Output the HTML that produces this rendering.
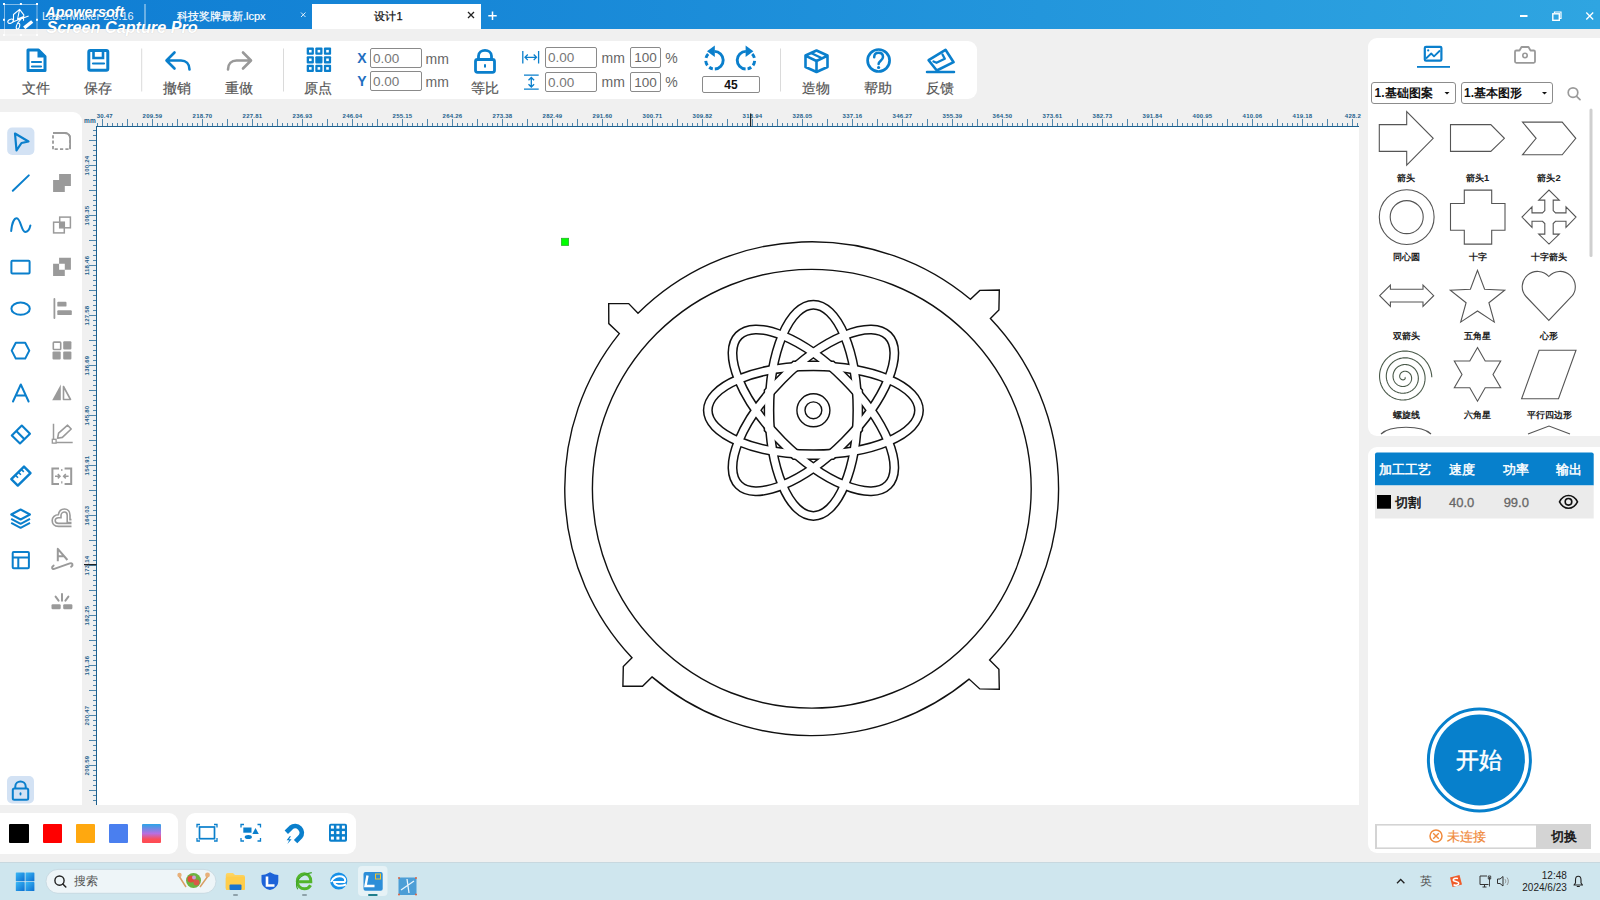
<!DOCTYPE html>
<html><head><meta charset="utf-8">
<style>
*{box-sizing:border-box;margin:0;padding:0}
html,body{width:1600px;height:900px;overflow:hidden;background:#F0F0F0;font-family:"Liberation Sans",sans-serif;position:relative}
.a{position:absolute}
.panel{position:absolute;background:#fff;border-radius:9px}
.lbl{position:absolute;font-size:14px;color:#555;white-space:nowrap;line-height:14px}
svg{position:absolute;overflow:visible}
</style></head><body>

<!-- title bar -->
<div class="a" style="left:0;top:0;width:1600px;height:29px;background:linear-gradient(90deg,#0F7DD3 0%,#1787D7 30%,#2FA5E1 100%)"></div>
<div class="a" style="left:312px;top:4px;width:169px;height:25px;background:#fff"></div>

<!-- panels -->
<div class="panel" style="left:-9px;top:41px;width:986px;height:58px"></div>
<div class="panel" style="left:-9px;top:112px;width:91px;height:693px;border-radius:0 9px 0 0"></div>
<div class="panel" style="left:1368px;top:38px;width:240px;height:398px"></div>
<div class="panel" style="left:1368px;top:447px;width:240px;height:406px"></div>
<div class="panel" style="left:-9px;top:813px;width:187px;height:41px"></div>
<div class="panel" style="left:186px;top:813px;width:170px;height:41px"></div>

<!-- canvas -->
<div class="a" style="left:97px;top:127px;width:1262px;height:678px;background:#fff"></div>

<!-- taskbar -->
<div class="a" style="left:0;top:862px;width:1600px;height:38px;background:#CFE6EE;border-top:1px solid #C8D8DF"></div>
<svg class="a" style="left:0;top:0" width="1600" height="900" shape-rendering="crispEdges">
<rect x="96" y="126" width="1263" height="1" fill="#1D5F8C"/>
<rect x="96" y="126" width="1" height="679" fill="#1D5F8C"/>
<rect x="97" y="123" width="1" height="3" fill="#4F86AD"/>
<rect x="102" y="119" width="1" height="7" fill="#4F86AD"/>
<rect x="107" y="123" width="1" height="3" fill="#4F86AD"/>
<rect x="112" y="123" width="1" height="3" fill="#4F86AD"/>
<rect x="117" y="123" width="1" height="3" fill="#4F86AD"/>
<rect x="122" y="123" width="1" height="3" fill="#4F86AD"/>
<rect x="127" y="119" width="1" height="7" fill="#4F86AD"/>
<rect x="132" y="123" width="1" height="3" fill="#4F86AD"/>
<rect x="137" y="123" width="1" height="3" fill="#4F86AD"/>
<rect x="142" y="123" width="1" height="3" fill="#4F86AD"/>
<rect x="147" y="123" width="1" height="3" fill="#4F86AD"/>
<rect x="152" y="119" width="1" height="7" fill="#4F86AD"/>
<rect x="157" y="123" width="1" height="3" fill="#4F86AD"/>
<rect x="162" y="123" width="1" height="3" fill="#4F86AD"/>
<rect x="167" y="123" width="1" height="3" fill="#4F86AD"/>
<rect x="172" y="123" width="1" height="3" fill="#4F86AD"/>
<rect x="177" y="119" width="1" height="7" fill="#4F86AD"/>
<rect x="182" y="123" width="1" height="3" fill="#4F86AD"/>
<rect x="187" y="123" width="1" height="3" fill="#4F86AD"/>
<rect x="192" y="123" width="1" height="3" fill="#4F86AD"/>
<rect x="197" y="123" width="1" height="3" fill="#4F86AD"/>
<rect x="202" y="119" width="1" height="7" fill="#4F86AD"/>
<rect x="207" y="123" width="1" height="3" fill="#4F86AD"/>
<rect x="212" y="123" width="1" height="3" fill="#4F86AD"/>
<rect x="217" y="123" width="1" height="3" fill="#4F86AD"/>
<rect x="222" y="123" width="1" height="3" fill="#4F86AD"/>
<rect x="227" y="119" width="1" height="7" fill="#4F86AD"/>
<rect x="232" y="123" width="1" height="3" fill="#4F86AD"/>
<rect x="237" y="123" width="1" height="3" fill="#4F86AD"/>
<rect x="242" y="123" width="1" height="3" fill="#4F86AD"/>
<rect x="247" y="123" width="1" height="3" fill="#4F86AD"/>
<rect x="252" y="119" width="1" height="7" fill="#4F86AD"/>
<rect x="257" y="123" width="1" height="3" fill="#4F86AD"/>
<rect x="262" y="123" width="1" height="3" fill="#4F86AD"/>
<rect x="267" y="123" width="1" height="3" fill="#4F86AD"/>
<rect x="272" y="123" width="1" height="3" fill="#4F86AD"/>
<rect x="277" y="119" width="1" height="7" fill="#4F86AD"/>
<rect x="282" y="123" width="1" height="3" fill="#4F86AD"/>
<rect x="287" y="123" width="1" height="3" fill="#4F86AD"/>
<rect x="292" y="123" width="1" height="3" fill="#4F86AD"/>
<rect x="297" y="123" width="1" height="3" fill="#4F86AD"/>
<rect x="302" y="119" width="1" height="7" fill="#4F86AD"/>
<rect x="307" y="123" width="1" height="3" fill="#4F86AD"/>
<rect x="312" y="123" width="1" height="3" fill="#4F86AD"/>
<rect x="317" y="123" width="1" height="3" fill="#4F86AD"/>
<rect x="322" y="123" width="1" height="3" fill="#4F86AD"/>
<rect x="327" y="119" width="1" height="7" fill="#4F86AD"/>
<rect x="332" y="123" width="1" height="3" fill="#4F86AD"/>
<rect x="337" y="123" width="1" height="3" fill="#4F86AD"/>
<rect x="342" y="123" width="1" height="3" fill="#4F86AD"/>
<rect x="347" y="123" width="1" height="3" fill="#4F86AD"/>
<rect x="352" y="119" width="1" height="7" fill="#4F86AD"/>
<rect x="357" y="123" width="1" height="3" fill="#4F86AD"/>
<rect x="362" y="123" width="1" height="3" fill="#4F86AD"/>
<rect x="367" y="123" width="1" height="3" fill="#4F86AD"/>
<rect x="372" y="123" width="1" height="3" fill="#4F86AD"/>
<rect x="377" y="119" width="1" height="7" fill="#4F86AD"/>
<rect x="382" y="123" width="1" height="3" fill="#4F86AD"/>
<rect x="387" y="123" width="1" height="3" fill="#4F86AD"/>
<rect x="392" y="123" width="1" height="3" fill="#4F86AD"/>
<rect x="397" y="123" width="1" height="3" fill="#4F86AD"/>
<rect x="402" y="119" width="1" height="7" fill="#4F86AD"/>
<rect x="407" y="123" width="1" height="3" fill="#4F86AD"/>
<rect x="412" y="123" width="1" height="3" fill="#4F86AD"/>
<rect x="417" y="123" width="1" height="3" fill="#4F86AD"/>
<rect x="422" y="123" width="1" height="3" fill="#4F86AD"/>
<rect x="427" y="119" width="1" height="7" fill="#4F86AD"/>
<rect x="432" y="123" width="1" height="3" fill="#4F86AD"/>
<rect x="437" y="123" width="1" height="3" fill="#4F86AD"/>
<rect x="442" y="123" width="1" height="3" fill="#4F86AD"/>
<rect x="447" y="123" width="1" height="3" fill="#4F86AD"/>
<rect x="452" y="119" width="1" height="7" fill="#4F86AD"/>
<rect x="457" y="123" width="1" height="3" fill="#4F86AD"/>
<rect x="462" y="123" width="1" height="3" fill="#4F86AD"/>
<rect x="467" y="123" width="1" height="3" fill="#4F86AD"/>
<rect x="472" y="123" width="1" height="3" fill="#4F86AD"/>
<rect x="477" y="119" width="1" height="7" fill="#4F86AD"/>
<rect x="482" y="123" width="1" height="3" fill="#4F86AD"/>
<rect x="487" y="123" width="1" height="3" fill="#4F86AD"/>
<rect x="492" y="123" width="1" height="3" fill="#4F86AD"/>
<rect x="497" y="123" width="1" height="3" fill="#4F86AD"/>
<rect x="502" y="119" width="1" height="7" fill="#4F86AD"/>
<rect x="507" y="123" width="1" height="3" fill="#4F86AD"/>
<rect x="512" y="123" width="1" height="3" fill="#4F86AD"/>
<rect x="517" y="123" width="1" height="3" fill="#4F86AD"/>
<rect x="522" y="123" width="1" height="3" fill="#4F86AD"/>
<rect x="527" y="119" width="1" height="7" fill="#4F86AD"/>
<rect x="532" y="123" width="1" height="3" fill="#4F86AD"/>
<rect x="537" y="123" width="1" height="3" fill="#4F86AD"/>
<rect x="542" y="123" width="1" height="3" fill="#4F86AD"/>
<rect x="547" y="123" width="1" height="3" fill="#4F86AD"/>
<rect x="552" y="119" width="1" height="7" fill="#4F86AD"/>
<rect x="557" y="123" width="1" height="3" fill="#4F86AD"/>
<rect x="562" y="123" width="1" height="3" fill="#4F86AD"/>
<rect x="567" y="123" width="1" height="3" fill="#4F86AD"/>
<rect x="572" y="123" width="1" height="3" fill="#4F86AD"/>
<rect x="577" y="119" width="1" height="7" fill="#4F86AD"/>
<rect x="582" y="123" width="1" height="3" fill="#4F86AD"/>
<rect x="587" y="123" width="1" height="3" fill="#4F86AD"/>
<rect x="592" y="123" width="1" height="3" fill="#4F86AD"/>
<rect x="597" y="123" width="1" height="3" fill="#4F86AD"/>
<rect x="602" y="119" width="1" height="7" fill="#4F86AD"/>
<rect x="607" y="123" width="1" height="3" fill="#4F86AD"/>
<rect x="612" y="123" width="1" height="3" fill="#4F86AD"/>
<rect x="617" y="123" width="1" height="3" fill="#4F86AD"/>
<rect x="622" y="123" width="1" height="3" fill="#4F86AD"/>
<rect x="627" y="119" width="1" height="7" fill="#4F86AD"/>
<rect x="632" y="123" width="1" height="3" fill="#4F86AD"/>
<rect x="637" y="123" width="1" height="3" fill="#4F86AD"/>
<rect x="642" y="123" width="1" height="3" fill="#4F86AD"/>
<rect x="647" y="123" width="1" height="3" fill="#4F86AD"/>
<rect x="652" y="119" width="1" height="7" fill="#4F86AD"/>
<rect x="657" y="123" width="1" height="3" fill="#4F86AD"/>
<rect x="662" y="123" width="1" height="3" fill="#4F86AD"/>
<rect x="667" y="123" width="1" height="3" fill="#4F86AD"/>
<rect x="672" y="123" width="1" height="3" fill="#4F86AD"/>
<rect x="677" y="119" width="1" height="7" fill="#4F86AD"/>
<rect x="682" y="123" width="1" height="3" fill="#4F86AD"/>
<rect x="687" y="123" width="1" height="3" fill="#4F86AD"/>
<rect x="692" y="123" width="1" height="3" fill="#4F86AD"/>
<rect x="697" y="123" width="1" height="3" fill="#4F86AD"/>
<rect x="702" y="119" width="1" height="7" fill="#4F86AD"/>
<rect x="707" y="123" width="1" height="3" fill="#4F86AD"/>
<rect x="712" y="123" width="1" height="3" fill="#4F86AD"/>
<rect x="717" y="123" width="1" height="3" fill="#4F86AD"/>
<rect x="722" y="123" width="1" height="3" fill="#4F86AD"/>
<rect x="727" y="119" width="1" height="7" fill="#4F86AD"/>
<rect x="732" y="123" width="1" height="3" fill="#4F86AD"/>
<rect x="737" y="123" width="1" height="3" fill="#4F86AD"/>
<rect x="742" y="123" width="1" height="3" fill="#4F86AD"/>
<rect x="747" y="123" width="1" height="3" fill="#4F86AD"/>
<rect x="752" y="119" width="1" height="7" fill="#4F86AD"/>
<rect x="757" y="123" width="1" height="3" fill="#4F86AD"/>
<rect x="762" y="123" width="1" height="3" fill="#4F86AD"/>
<rect x="767" y="123" width="1" height="3" fill="#4F86AD"/>
<rect x="772" y="123" width="1" height="3" fill="#4F86AD"/>
<rect x="777" y="119" width="1" height="7" fill="#4F86AD"/>
<rect x="782" y="123" width="1" height="3" fill="#4F86AD"/>
<rect x="787" y="123" width="1" height="3" fill="#4F86AD"/>
<rect x="792" y="123" width="1" height="3" fill="#4F86AD"/>
<rect x="797" y="123" width="1" height="3" fill="#4F86AD"/>
<rect x="802" y="119" width="1" height="7" fill="#4F86AD"/>
<rect x="807" y="123" width="1" height="3" fill="#4F86AD"/>
<rect x="812" y="123" width="1" height="3" fill="#4F86AD"/>
<rect x="817" y="123" width="1" height="3" fill="#4F86AD"/>
<rect x="822" y="123" width="1" height="3" fill="#4F86AD"/>
<rect x="827" y="119" width="1" height="7" fill="#4F86AD"/>
<rect x="832" y="123" width="1" height="3" fill="#4F86AD"/>
<rect x="837" y="123" width="1" height="3" fill="#4F86AD"/>
<rect x="842" y="123" width="1" height="3" fill="#4F86AD"/>
<rect x="847" y="123" width="1" height="3" fill="#4F86AD"/>
<rect x="852" y="119" width="1" height="7" fill="#4F86AD"/>
<rect x="857" y="123" width="1" height="3" fill="#4F86AD"/>
<rect x="862" y="123" width="1" height="3" fill="#4F86AD"/>
<rect x="867" y="123" width="1" height="3" fill="#4F86AD"/>
<rect x="872" y="123" width="1" height="3" fill="#4F86AD"/>
<rect x="877" y="119" width="1" height="7" fill="#4F86AD"/>
<rect x="882" y="123" width="1" height="3" fill="#4F86AD"/>
<rect x="887" y="123" width="1" height="3" fill="#4F86AD"/>
<rect x="892" y="123" width="1" height="3" fill="#4F86AD"/>
<rect x="897" y="123" width="1" height="3" fill="#4F86AD"/>
<rect x="902" y="119" width="1" height="7" fill="#4F86AD"/>
<rect x="907" y="123" width="1" height="3" fill="#4F86AD"/>
<rect x="912" y="123" width="1" height="3" fill="#4F86AD"/>
<rect x="917" y="123" width="1" height="3" fill="#4F86AD"/>
<rect x="922" y="123" width="1" height="3" fill="#4F86AD"/>
<rect x="927" y="119" width="1" height="7" fill="#4F86AD"/>
<rect x="932" y="123" width="1" height="3" fill="#4F86AD"/>
<rect x="937" y="123" width="1" height="3" fill="#4F86AD"/>
<rect x="942" y="123" width="1" height="3" fill="#4F86AD"/>
<rect x="947" y="123" width="1" height="3" fill="#4F86AD"/>
<rect x="952" y="119" width="1" height="7" fill="#4F86AD"/>
<rect x="957" y="123" width="1" height="3" fill="#4F86AD"/>
<rect x="962" y="123" width="1" height="3" fill="#4F86AD"/>
<rect x="967" y="123" width="1" height="3" fill="#4F86AD"/>
<rect x="972" y="123" width="1" height="3" fill="#4F86AD"/>
<rect x="977" y="119" width="1" height="7" fill="#4F86AD"/>
<rect x="982" y="123" width="1" height="3" fill="#4F86AD"/>
<rect x="987" y="123" width="1" height="3" fill="#4F86AD"/>
<rect x="992" y="123" width="1" height="3" fill="#4F86AD"/>
<rect x="997" y="123" width="1" height="3" fill="#4F86AD"/>
<rect x="1002" y="119" width="1" height="7" fill="#4F86AD"/>
<rect x="1007" y="123" width="1" height="3" fill="#4F86AD"/>
<rect x="1012" y="123" width="1" height="3" fill="#4F86AD"/>
<rect x="1017" y="123" width="1" height="3" fill="#4F86AD"/>
<rect x="1022" y="123" width="1" height="3" fill="#4F86AD"/>
<rect x="1027" y="119" width="1" height="7" fill="#4F86AD"/>
<rect x="1032" y="123" width="1" height="3" fill="#4F86AD"/>
<rect x="1037" y="123" width="1" height="3" fill="#4F86AD"/>
<rect x="1042" y="123" width="1" height="3" fill="#4F86AD"/>
<rect x="1047" y="123" width="1" height="3" fill="#4F86AD"/>
<rect x="1052" y="119" width="1" height="7" fill="#4F86AD"/>
<rect x="1057" y="123" width="1" height="3" fill="#4F86AD"/>
<rect x="1062" y="123" width="1" height="3" fill="#4F86AD"/>
<rect x="1067" y="123" width="1" height="3" fill="#4F86AD"/>
<rect x="1072" y="123" width="1" height="3" fill="#4F86AD"/>
<rect x="1077" y="119" width="1" height="7" fill="#4F86AD"/>
<rect x="1082" y="123" width="1" height="3" fill="#4F86AD"/>
<rect x="1087" y="123" width="1" height="3" fill="#4F86AD"/>
<rect x="1092" y="123" width="1" height="3" fill="#4F86AD"/>
<rect x="1097" y="123" width="1" height="3" fill="#4F86AD"/>
<rect x="1102" y="119" width="1" height="7" fill="#4F86AD"/>
<rect x="1107" y="123" width="1" height="3" fill="#4F86AD"/>
<rect x="1112" y="123" width="1" height="3" fill="#4F86AD"/>
<rect x="1117" y="123" width="1" height="3" fill="#4F86AD"/>
<rect x="1122" y="123" width="1" height="3" fill="#4F86AD"/>
<rect x="1127" y="119" width="1" height="7" fill="#4F86AD"/>
<rect x="1132" y="123" width="1" height="3" fill="#4F86AD"/>
<rect x="1137" y="123" width="1" height="3" fill="#4F86AD"/>
<rect x="1142" y="123" width="1" height="3" fill="#4F86AD"/>
<rect x="1147" y="123" width="1" height="3" fill="#4F86AD"/>
<rect x="1152" y="119" width="1" height="7" fill="#4F86AD"/>
<rect x="1157" y="123" width="1" height="3" fill="#4F86AD"/>
<rect x="1162" y="123" width="1" height="3" fill="#4F86AD"/>
<rect x="1167" y="123" width="1" height="3" fill="#4F86AD"/>
<rect x="1172" y="123" width="1" height="3" fill="#4F86AD"/>
<rect x="1177" y="119" width="1" height="7" fill="#4F86AD"/>
<rect x="1182" y="123" width="1" height="3" fill="#4F86AD"/>
<rect x="1187" y="123" width="1" height="3" fill="#4F86AD"/>
<rect x="1192" y="123" width="1" height="3" fill="#4F86AD"/>
<rect x="1197" y="123" width="1" height="3" fill="#4F86AD"/>
<rect x="1202" y="119" width="1" height="7" fill="#4F86AD"/>
<rect x="1207" y="123" width="1" height="3" fill="#4F86AD"/>
<rect x="1212" y="123" width="1" height="3" fill="#4F86AD"/>
<rect x="1217" y="123" width="1" height="3" fill="#4F86AD"/>
<rect x="1222" y="123" width="1" height="3" fill="#4F86AD"/>
<rect x="1227" y="119" width="1" height="7" fill="#4F86AD"/>
<rect x="1232" y="123" width="1" height="3" fill="#4F86AD"/>
<rect x="1237" y="123" width="1" height="3" fill="#4F86AD"/>
<rect x="1242" y="123" width="1" height="3" fill="#4F86AD"/>
<rect x="1247" y="123" width="1" height="3" fill="#4F86AD"/>
<rect x="1252" y="119" width="1" height="7" fill="#4F86AD"/>
<rect x="1257" y="123" width="1" height="3" fill="#4F86AD"/>
<rect x="1262" y="123" width="1" height="3" fill="#4F86AD"/>
<rect x="1267" y="123" width="1" height="3" fill="#4F86AD"/>
<rect x="1272" y="123" width="1" height="3" fill="#4F86AD"/>
<rect x="1277" y="119" width="1" height="7" fill="#4F86AD"/>
<rect x="1282" y="123" width="1" height="3" fill="#4F86AD"/>
<rect x="1287" y="123" width="1" height="3" fill="#4F86AD"/>
<rect x="1292" y="123" width="1" height="3" fill="#4F86AD"/>
<rect x="1297" y="123" width="1" height="3" fill="#4F86AD"/>
<rect x="1302" y="119" width="1" height="7" fill="#4F86AD"/>
<rect x="1307" y="123" width="1" height="3" fill="#4F86AD"/>
<rect x="1312" y="123" width="1" height="3" fill="#4F86AD"/>
<rect x="1317" y="123" width="1" height="3" fill="#4F86AD"/>
<rect x="1322" y="123" width="1" height="3" fill="#4F86AD"/>
<rect x="1327" y="119" width="1" height="7" fill="#4F86AD"/>
<rect x="1332" y="123" width="1" height="3" fill="#4F86AD"/>
<rect x="1337" y="123" width="1" height="3" fill="#4F86AD"/>
<rect x="1342" y="123" width="1" height="3" fill="#4F86AD"/>
<rect x="1347" y="123" width="1" height="3" fill="#4F86AD"/>
<rect x="1352" y="119" width="1" height="7" fill="#4F86AD"/>
<rect x="1357" y="123" width="1" height="3" fill="#4F86AD"/>
<rect x="93" y="130" width="3" height="1" fill="#4F86AD"/>
<rect x="93" y="135" width="3" height="1" fill="#4F86AD"/>
<rect x="89" y="140" width="7" height="1" fill="#4F86AD"/>
<rect x="93" y="145" width="3" height="1" fill="#4F86AD"/>
<rect x="93" y="150" width="3" height="1" fill="#4F86AD"/>
<rect x="93" y="155" width="3" height="1" fill="#4F86AD"/>
<rect x="93" y="160" width="3" height="1" fill="#4F86AD"/>
<rect x="89" y="165" width="7" height="1" fill="#4F86AD"/>
<rect x="93" y="170" width="3" height="1" fill="#4F86AD"/>
<rect x="93" y="175" width="3" height="1" fill="#4F86AD"/>
<rect x="93" y="180" width="3" height="1" fill="#4F86AD"/>
<rect x="93" y="185" width="3" height="1" fill="#4F86AD"/>
<rect x="89" y="190" width="7" height="1" fill="#4F86AD"/>
<rect x="93" y="195" width="3" height="1" fill="#4F86AD"/>
<rect x="93" y="200" width="3" height="1" fill="#4F86AD"/>
<rect x="93" y="205" width="3" height="1" fill="#4F86AD"/>
<rect x="93" y="210" width="3" height="1" fill="#4F86AD"/>
<rect x="89" y="215" width="7" height="1" fill="#4F86AD"/>
<rect x="93" y="220" width="3" height="1" fill="#4F86AD"/>
<rect x="93" y="225" width="3" height="1" fill="#4F86AD"/>
<rect x="93" y="230" width="3" height="1" fill="#4F86AD"/>
<rect x="93" y="235" width="3" height="1" fill="#4F86AD"/>
<rect x="89" y="240" width="7" height="1" fill="#4F86AD"/>
<rect x="93" y="245" width="3" height="1" fill="#4F86AD"/>
<rect x="93" y="250" width="3" height="1" fill="#4F86AD"/>
<rect x="93" y="255" width="3" height="1" fill="#4F86AD"/>
<rect x="93" y="260" width="3" height="1" fill="#4F86AD"/>
<rect x="89" y="265" width="7" height="1" fill="#4F86AD"/>
<rect x="93" y="270" width="3" height="1" fill="#4F86AD"/>
<rect x="93" y="275" width="3" height="1" fill="#4F86AD"/>
<rect x="93" y="280" width="3" height="1" fill="#4F86AD"/>
<rect x="93" y="285" width="3" height="1" fill="#4F86AD"/>
<rect x="89" y="290" width="7" height="1" fill="#4F86AD"/>
<rect x="93" y="295" width="3" height="1" fill="#4F86AD"/>
<rect x="93" y="300" width="3" height="1" fill="#4F86AD"/>
<rect x="93" y="305" width="3" height="1" fill="#4F86AD"/>
<rect x="93" y="310" width="3" height="1" fill="#4F86AD"/>
<rect x="89" y="315" width="7" height="1" fill="#4F86AD"/>
<rect x="93" y="320" width="3" height="1" fill="#4F86AD"/>
<rect x="93" y="325" width="3" height="1" fill="#4F86AD"/>
<rect x="93" y="330" width="3" height="1" fill="#4F86AD"/>
<rect x="93" y="335" width="3" height="1" fill="#4F86AD"/>
<rect x="89" y="340" width="7" height="1" fill="#4F86AD"/>
<rect x="93" y="345" width="3" height="1" fill="#4F86AD"/>
<rect x="93" y="350" width="3" height="1" fill="#4F86AD"/>
<rect x="93" y="355" width="3" height="1" fill="#4F86AD"/>
<rect x="93" y="360" width="3" height="1" fill="#4F86AD"/>
<rect x="89" y="365" width="7" height="1" fill="#4F86AD"/>
<rect x="93" y="370" width="3" height="1" fill="#4F86AD"/>
<rect x="93" y="375" width="3" height="1" fill="#4F86AD"/>
<rect x="93" y="380" width="3" height="1" fill="#4F86AD"/>
<rect x="93" y="385" width="3" height="1" fill="#4F86AD"/>
<rect x="89" y="390" width="7" height="1" fill="#4F86AD"/>
<rect x="93" y="395" width="3" height="1" fill="#4F86AD"/>
<rect x="93" y="400" width="3" height="1" fill="#4F86AD"/>
<rect x="93" y="405" width="3" height="1" fill="#4F86AD"/>
<rect x="93" y="410" width="3" height="1" fill="#4F86AD"/>
<rect x="89" y="415" width="7" height="1" fill="#4F86AD"/>
<rect x="93" y="420" width="3" height="1" fill="#4F86AD"/>
<rect x="93" y="425" width="3" height="1" fill="#4F86AD"/>
<rect x="93" y="430" width="3" height="1" fill="#4F86AD"/>
<rect x="93" y="435" width="3" height="1" fill="#4F86AD"/>
<rect x="89" y="440" width="7" height="1" fill="#4F86AD"/>
<rect x="93" y="445" width="3" height="1" fill="#4F86AD"/>
<rect x="93" y="450" width="3" height="1" fill="#4F86AD"/>
<rect x="93" y="455" width="3" height="1" fill="#4F86AD"/>
<rect x="93" y="460" width="3" height="1" fill="#4F86AD"/>
<rect x="89" y="465" width="7" height="1" fill="#4F86AD"/>
<rect x="93" y="470" width="3" height="1" fill="#4F86AD"/>
<rect x="93" y="475" width="3" height="1" fill="#4F86AD"/>
<rect x="93" y="480" width="3" height="1" fill="#4F86AD"/>
<rect x="93" y="485" width="3" height="1" fill="#4F86AD"/>
<rect x="89" y="490" width="7" height="1" fill="#4F86AD"/>
<rect x="93" y="495" width="3" height="1" fill="#4F86AD"/>
<rect x="93" y="500" width="3" height="1" fill="#4F86AD"/>
<rect x="93" y="505" width="3" height="1" fill="#4F86AD"/>
<rect x="93" y="510" width="3" height="1" fill="#4F86AD"/>
<rect x="89" y="515" width="7" height="1" fill="#4F86AD"/>
<rect x="93" y="520" width="3" height="1" fill="#4F86AD"/>
<rect x="93" y="525" width="3" height="1" fill="#4F86AD"/>
<rect x="93" y="530" width="3" height="1" fill="#4F86AD"/>
<rect x="93" y="535" width="3" height="1" fill="#4F86AD"/>
<rect x="89" y="540" width="7" height="1" fill="#4F86AD"/>
<rect x="93" y="545" width="3" height="1" fill="#4F86AD"/>
<rect x="93" y="550" width="3" height="1" fill="#4F86AD"/>
<rect x="93" y="555" width="3" height="1" fill="#4F86AD"/>
<rect x="93" y="560" width="3" height="1" fill="#4F86AD"/>
<rect x="89" y="565" width="7" height="1" fill="#4F86AD"/>
<rect x="93" y="570" width="3" height="1" fill="#4F86AD"/>
<rect x="93" y="575" width="3" height="1" fill="#4F86AD"/>
<rect x="93" y="580" width="3" height="1" fill="#4F86AD"/>
<rect x="93" y="585" width="3" height="1" fill="#4F86AD"/>
<rect x="89" y="590" width="7" height="1" fill="#4F86AD"/>
<rect x="93" y="595" width="3" height="1" fill="#4F86AD"/>
<rect x="93" y="600" width="3" height="1" fill="#4F86AD"/>
<rect x="93" y="605" width="3" height="1" fill="#4F86AD"/>
<rect x="93" y="610" width="3" height="1" fill="#4F86AD"/>
<rect x="89" y="615" width="7" height="1" fill="#4F86AD"/>
<rect x="93" y="620" width="3" height="1" fill="#4F86AD"/>
<rect x="93" y="625" width="3" height="1" fill="#4F86AD"/>
<rect x="93" y="630" width="3" height="1" fill="#4F86AD"/>
<rect x="93" y="635" width="3" height="1" fill="#4F86AD"/>
<rect x="89" y="640" width="7" height="1" fill="#4F86AD"/>
<rect x="93" y="645" width="3" height="1" fill="#4F86AD"/>
<rect x="93" y="650" width="3" height="1" fill="#4F86AD"/>
<rect x="93" y="655" width="3" height="1" fill="#4F86AD"/>
<rect x="93" y="660" width="3" height="1" fill="#4F86AD"/>
<rect x="89" y="665" width="7" height="1" fill="#4F86AD"/>
<rect x="93" y="670" width="3" height="1" fill="#4F86AD"/>
<rect x="93" y="675" width="3" height="1" fill="#4F86AD"/>
<rect x="93" y="680" width="3" height="1" fill="#4F86AD"/>
<rect x="93" y="685" width="3" height="1" fill="#4F86AD"/>
<rect x="89" y="690" width="7" height="1" fill="#4F86AD"/>
<rect x="93" y="695" width="3" height="1" fill="#4F86AD"/>
<rect x="93" y="700" width="3" height="1" fill="#4F86AD"/>
<rect x="93" y="705" width="3" height="1" fill="#4F86AD"/>
<rect x="93" y="710" width="3" height="1" fill="#4F86AD"/>
<rect x="89" y="715" width="7" height="1" fill="#4F86AD"/>
<rect x="93" y="720" width="3" height="1" fill="#4F86AD"/>
<rect x="93" y="725" width="3" height="1" fill="#4F86AD"/>
<rect x="93" y="730" width="3" height="1" fill="#4F86AD"/>
<rect x="93" y="735" width="3" height="1" fill="#4F86AD"/>
<rect x="89" y="740" width="7" height="1" fill="#4F86AD"/>
<rect x="93" y="745" width="3" height="1" fill="#4F86AD"/>
<rect x="93" y="750" width="3" height="1" fill="#4F86AD"/>
<rect x="93" y="755" width="3" height="1" fill="#4F86AD"/>
<rect x="93" y="760" width="3" height="1" fill="#4F86AD"/>
<rect x="89" y="765" width="7" height="1" fill="#4F86AD"/>
<rect x="93" y="770" width="3" height="1" fill="#4F86AD"/>
<rect x="93" y="775" width="3" height="1" fill="#4F86AD"/>
<rect x="93" y="780" width="3" height="1" fill="#4F86AD"/>
<rect x="93" y="785" width="3" height="1" fill="#4F86AD"/>
<rect x="89" y="790" width="7" height="1" fill="#4F86AD"/>
<rect x="93" y="795" width="3" height="1" fill="#4F86AD"/>
<rect x="93" y="800" width="3" height="1" fill="#4F86AD"/>
</svg>
<svg class="a" style="left:0;top:0" width="1600" height="900">
<text x="104.8" y="118.2" font-size="6" fill="#1D5F8C" text-anchor="middle" font-family="Liberation Sans" font-weight="bold" letter-spacing="0.25">30.47</text>
<text x="152.5" y="118.2" font-size="6" fill="#1D5F8C" text-anchor="middle" font-family="Liberation Sans" font-weight="bold" letter-spacing="0.25">209.59</text>
<text x="202.5" y="118.2" font-size="6" fill="#1D5F8C" text-anchor="middle" font-family="Liberation Sans" font-weight="bold" letter-spacing="0.25">218.70</text>
<text x="252.5" y="118.2" font-size="6" fill="#1D5F8C" text-anchor="middle" font-family="Liberation Sans" font-weight="bold" letter-spacing="0.25">227.81</text>
<text x="302.5" y="118.2" font-size="6" fill="#1D5F8C" text-anchor="middle" font-family="Liberation Sans" font-weight="bold" letter-spacing="0.25">236.93</text>
<text x="352.5" y="118.2" font-size="6" fill="#1D5F8C" text-anchor="middle" font-family="Liberation Sans" font-weight="bold" letter-spacing="0.25">246.04</text>
<text x="402.5" y="118.2" font-size="6" fill="#1D5F8C" text-anchor="middle" font-family="Liberation Sans" font-weight="bold" letter-spacing="0.25">255.15</text>
<text x="452.5" y="118.2" font-size="6" fill="#1D5F8C" text-anchor="middle" font-family="Liberation Sans" font-weight="bold" letter-spacing="0.25">264.26</text>
<text x="502.5" y="118.2" font-size="6" fill="#1D5F8C" text-anchor="middle" font-family="Liberation Sans" font-weight="bold" letter-spacing="0.25">273.38</text>
<text x="552.5" y="118.2" font-size="6" fill="#1D5F8C" text-anchor="middle" font-family="Liberation Sans" font-weight="bold" letter-spacing="0.25">282.49</text>
<text x="602.5" y="118.2" font-size="6" fill="#1D5F8C" text-anchor="middle" font-family="Liberation Sans" font-weight="bold" letter-spacing="0.25">291.60</text>
<text x="652.5" y="118.2" font-size="6" fill="#1D5F8C" text-anchor="middle" font-family="Liberation Sans" font-weight="bold" letter-spacing="0.25">300.71</text>
<text x="702.5" y="118.2" font-size="6" fill="#1D5F8C" text-anchor="middle" font-family="Liberation Sans" font-weight="bold" letter-spacing="0.25">309.82</text>
<text x="752.5" y="118.2" font-size="6" fill="#1D5F8C" text-anchor="middle" font-family="Liberation Sans" font-weight="bold" letter-spacing="0.25">318.94</text>
<text x="802.5" y="118.2" font-size="6" fill="#1D5F8C" text-anchor="middle" font-family="Liberation Sans" font-weight="bold" letter-spacing="0.25">328.05</text>
<text x="852.5" y="118.2" font-size="6" fill="#1D5F8C" text-anchor="middle" font-family="Liberation Sans" font-weight="bold" letter-spacing="0.25">337.16</text>
<text x="902.5" y="118.2" font-size="6" fill="#1D5F8C" text-anchor="middle" font-family="Liberation Sans" font-weight="bold" letter-spacing="0.25">346.27</text>
<text x="952.5" y="118.2" font-size="6" fill="#1D5F8C" text-anchor="middle" font-family="Liberation Sans" font-weight="bold" letter-spacing="0.25">355.39</text>
<text x="1002.5" y="118.2" font-size="6" fill="#1D5F8C" text-anchor="middle" font-family="Liberation Sans" font-weight="bold" letter-spacing="0.25">364.50</text>
<text x="1052.5" y="118.2" font-size="6" fill="#1D5F8C" text-anchor="middle" font-family="Liberation Sans" font-weight="bold" letter-spacing="0.25">373.61</text>
<text x="1102.5" y="118.2" font-size="6" fill="#1D5F8C" text-anchor="middle" font-family="Liberation Sans" font-weight="bold" letter-spacing="0.25">382.73</text>
<text x="1152.5" y="118.2" font-size="6" fill="#1D5F8C" text-anchor="middle" font-family="Liberation Sans" font-weight="bold" letter-spacing="0.25">391.84</text>
<text x="1202.5" y="118.2" font-size="6" fill="#1D5F8C" text-anchor="middle" font-family="Liberation Sans" font-weight="bold" letter-spacing="0.25">400.95</text>
<text x="1252.5" y="118.2" font-size="6" fill="#1D5F8C" text-anchor="middle" font-family="Liberation Sans" font-weight="bold" letter-spacing="0.25">410.06</text>
<text x="1302.5" y="118.2" font-size="6" fill="#1D5F8C" text-anchor="middle" font-family="Liberation Sans" font-weight="bold" letter-spacing="0.25">419.18</text>
<text x="1353" y="118.2" font-size="6" fill="#1D5F8C" text-anchor="middle" font-family="Liberation Sans" font-weight="bold" letter-spacing="0.25">428.2</text>
<text transform="translate(88.6 165.5) rotate(-90)" x="0" y="0" font-size="6" fill="#1D5F8C" text-anchor="middle" font-family="Liberation Sans" font-weight="bold" letter-spacing="0.25">100.24</text>
<text transform="translate(88.6 215.5) rotate(-90)" x="0" y="0" font-size="6" fill="#1D5F8C" text-anchor="middle" font-family="Liberation Sans" font-weight="bold" letter-spacing="0.25">109.35</text>
<text transform="translate(88.6 265.5) rotate(-90)" x="0" y="0" font-size="6" fill="#1D5F8C" text-anchor="middle" font-family="Liberation Sans" font-weight="bold" letter-spacing="0.25">118.46</text>
<text transform="translate(88.6 315.5) rotate(-90)" x="0" y="0" font-size="6" fill="#1D5F8C" text-anchor="middle" font-family="Liberation Sans" font-weight="bold" letter-spacing="0.25">127.58</text>
<text transform="translate(88.6 365.5) rotate(-90)" x="0" y="0" font-size="6" fill="#1D5F8C" text-anchor="middle" font-family="Liberation Sans" font-weight="bold" letter-spacing="0.25">136.69</text>
<text transform="translate(88.6 415.5) rotate(-90)" x="0" y="0" font-size="6" fill="#1D5F8C" text-anchor="middle" font-family="Liberation Sans" font-weight="bold" letter-spacing="0.25">145.80</text>
<text transform="translate(88.6 465.5) rotate(-90)" x="0" y="0" font-size="6" fill="#1D5F8C" text-anchor="middle" font-family="Liberation Sans" font-weight="bold" letter-spacing="0.25">154.91</text>
<text transform="translate(88.6 515.5) rotate(-90)" x="0" y="0" font-size="6" fill="#1D5F8C" text-anchor="middle" font-family="Liberation Sans" font-weight="bold" letter-spacing="0.25">164.03</text>
<text transform="translate(88.6 565.5) rotate(-90)" x="0" y="0" font-size="6" fill="#1D5F8C" text-anchor="middle" font-family="Liberation Sans" font-weight="bold" letter-spacing="0.25">173.14</text>
<text transform="translate(88.6 615.5) rotate(-90)" x="0" y="0" font-size="6" fill="#1D5F8C" text-anchor="middle" font-family="Liberation Sans" font-weight="bold" letter-spacing="0.25">182.25</text>
<text transform="translate(88.6 665.5) rotate(-90)" x="0" y="0" font-size="6" fill="#1D5F8C" text-anchor="middle" font-family="Liberation Sans" font-weight="bold" letter-spacing="0.25">191.36</text>
<text transform="translate(88.6 715.5) rotate(-90)" x="0" y="0" font-size="6" fill="#1D5F8C" text-anchor="middle" font-family="Liberation Sans" font-weight="bold" letter-spacing="0.25">200.47</text>
<text transform="translate(88.6 765.5) rotate(-90)" x="0" y="0" font-size="6" fill="#1D5F8C" text-anchor="middle" font-family="Liberation Sans" font-weight="bold" letter-spacing="0.25">209.59</text>
<text x="84" y="123" font-size="6.5" fill="#1D5F8C" font-family="Liberation Sans" font-weight="bold" letter-spacing="0.1">mm</text>
<rect x="750" y="113.5" width="1.2" height="13" fill="#222"/>
<rect x="84" y="564" width="12.5" height="1.2" fill="#222"/>
</svg><svg class="a" style="left:0;top:0" width="1600" height="900">
<path d="M619.3 333.6 A247.0 247.0 0 0 0 632 657.8 L623.3 666.5 L622.9 686.2 L642.5 686.2 L652 676.9 A247.0 247.0 0 0 0 969.1 679.1 L979.8 688.9 L999.3 689.3 L998.9 669.3 L989.6 660 A247.0 247.0 0 0 0 990.4 318.4 L998.9 310 L999.3 290 L979.8 290.4 L970.4 299.3 A247.0 247.0 0 0 0 638 313.3 L628.7 303.6 L608.7 303.6 L608.8 323.6 L619.3 333.6 Z" fill="none" stroke="#111" stroke-width="1.4" stroke-linejoin="miter"/>
<circle cx="811.8" cy="488.75" r="219.4" fill="none" stroke="#111" stroke-width="1.4"/>
<ellipse cx="813.4" cy="410.3" rx="44.0" ry="105.6" transform="rotate(0 813.4 410.3)" fill="none" stroke="#111" stroke-width="10.0"/>
<ellipse cx="813.4" cy="410.3" rx="44.0" ry="105.6" transform="rotate(45 813.4 410.3)" fill="none" stroke="#111" stroke-width="10.0"/>
<ellipse cx="813.4" cy="410.3" rx="44.0" ry="105.6" transform="rotate(90 813.4 410.3)" fill="none" stroke="#111" stroke-width="10.0"/>
<ellipse cx="813.4" cy="410.3" rx="44.0" ry="105.6" transform="rotate(135 813.4 410.3)" fill="none" stroke="#111" stroke-width="10.0"/>
<path d="M858.15 428.84 L831.94 455.05 L794.86 455.05 L768.65 428.84 L768.65 391.76 L794.86 365.55 L831.94 365.55 L858.15 391.76 Z" fill="none" stroke="#111" stroke-width="10.0" stroke-linejoin="miter"/>
<ellipse cx="813.4" cy="410.3" rx="44.0" ry="105.6" transform="rotate(0 813.4 410.3)" fill="none" stroke="#fff" stroke-width="7.0"/>
<ellipse cx="813.4" cy="410.3" rx="44.0" ry="105.6" transform="rotate(45 813.4 410.3)" fill="none" stroke="#fff" stroke-width="7.0"/>
<ellipse cx="813.4" cy="410.3" rx="44.0" ry="105.6" transform="rotate(90 813.4 410.3)" fill="none" stroke="#fff" stroke-width="7.0"/>
<ellipse cx="813.4" cy="410.3" rx="44.0" ry="105.6" transform="rotate(135 813.4 410.3)" fill="none" stroke="#fff" stroke-width="7.0"/>
<path d="M858.15 428.84 L831.94 455.05 L794.86 455.05 L768.65 428.84 L768.65 391.76 L794.86 365.55 L831.94 365.55 L858.15 391.76 Z" fill="none" stroke="#fff" stroke-width="7.0" stroke-linejoin="miter"/>
<circle cx="813.4" cy="410.3" r="16.5" fill="none" stroke="#111" stroke-width="1.4"/>
<circle cx="813.4" cy="410.3" r="8.4" fill="none" stroke="#111" stroke-width="1.4"/>
<rect x="561.3" y="238.2" width="7.4" height="7.4" fill="#00FF00" stroke="#2a9a2a" stroke-width="0.6"/>
</svg><svg class="a" style="left:0;top:0" width="1600" height="60">
<rect x="4.5" y="4.5" width="32.5" height="30.5" fill="none" stroke="#fff" stroke-opacity="0.6" stroke-width="0.8"/>
<rect x="3" y="3" width="2" height="2" fill="#fff"/>
<rect x="19.9" y="3" width="2" height="2" fill="#fff"/>
<rect x="36" y="3" width="2" height="2" fill="#fff"/>
<rect x="3" y="18.8" width="2" height="2" fill="#fff"/>
<rect x="36" y="18.8" width="2" height="2" fill="#fff"/>
<rect x="3" y="34" width="2" height="2" fill="#fff"/>
<rect x="19.9" y="34" width="2" height="2" fill="#fff"/>
<rect x="36" y="34" width="2" height="2" fill="#fff"/>
<path d="M13.5 20.5 V14.5 L19.6 9.3 L23.8 14.8 L23.5 20.8 M19.6 9.3 L17.6 19 L23 16.8 L17.2 23.5 M12.5 22 L28.6 16" fill="none" stroke="#fff" stroke-width="1.1" stroke-linejoin="round"/>
<ellipse cx="10.6" cy="21.2" rx="2.9" ry="1.9" transform="rotate(-25 10.6 21.2)" fill="none" stroke="#fff" stroke-width="1.1"/>
<ellipse cx="18" cy="26.2" rx="1.6" ry="3" transform="rotate(15 18 26.2)" fill="none" stroke="#fff" stroke-width="1.1"/>
<path d="M24.2 27.8 L32.2 21.5" stroke="#fff" stroke-width="3.4"/>
<rect x="1520" y="15" width="7.5" height="2" fill="#fff"/>
<rect x="1552.8" y="13.8" width="6.5" height="6.5" fill="none" stroke="#fff" stroke-width="1.4"/>
<path d="M1554.5 13 V12 H1561 V18.5 H1560" fill="none" stroke="#fff" stroke-width="1.2"/>
<path d="M1586.3 12.5 L1593.2 19.5 M1593.2 12.5 L1586.3 19.5" stroke="#fff" stroke-width="1.3"/>
<path d="M301 12.5 L305.5 17 M305.5 12.5 L301 17" stroke="#fff" stroke-opacity="0.85" stroke-width="1"/>
<path d="M468 12 L474 18 M474 12 L468 18" stroke="#222" stroke-width="1.3"/>
<path d="M492.5 11.5 V20 M488.3 15.8 H496.7" stroke="#fff" stroke-width="1.5"/>
<rect x="144.5" y="4" width="1" height="25" fill="#fff" fill-opacity="0.75"/>
</svg>
<div class="a" style="left:42px;top:8.8px;font-size:11px;line-height:15px;color:rgba(255,255,255,0.9);font-weight:normal;white-space:nowrap;">LaserMaker 2.0.16</div>
<div class="a" style="left:177px;top:8.5px;font-size:11px;line-height:15px;color:#fff;font-weight:normal;white-space:nowrap;-webkit-text-stroke:0.2px #fff">科技奖牌最新.lcpx</div>
<div class="a" style="left:238.5px;top:8.5px;width:300px;text-align:center;font-size:11px;line-height:15px;color:#111;font-weight:normal;white-space:nowrap;-webkit-text-stroke:0.25px #111">设计1</div>
<div class="a" style="left:45.5px;top:3.1500000000000004px;font-size:14.3px;line-height:18.3px;color:#fff;font-weight:bold;white-space:nowrap;font-style:italic;text-shadow:0 0 1px rgba(0,0,0,0.25)">Apowersoft</div>
<div class="a" style="left:46.5px;top:16.9px;font-size:16.2px;line-height:20.2px;color:#fff;font-weight:bold;white-space:nowrap;font-style:italic;text-shadow:0 0 1px rgba(0,0,0,0.2)">Screen Capture Pro</div><svg class="a" style="left:0;top:0" width="1600" height="120">
<path d="M28 50 H38.5 L45 56.5 V70.5 H28 Z" fill="none" stroke="#0A7FCC" stroke-width="3" stroke-linejoin="round"/>
<path d="M37.5 49.5 V57.5 H45.5 Z" fill="#0A7FCC"/>
<path d="M32 62 H41 M32 66.5 H41" stroke="#0A7FCC" stroke-width="2.2" stroke-linecap="round"/>
<rect x="88.8" y="50.5" width="19" height="19.7" rx="1.5" fill="none" stroke="#0A7FCC" stroke-width="3"/>
<path d="M93.5 51 V58 H103 V51" fill="none" stroke="#0A7FCC" stroke-width="2.6"/>
<path d="M93 63.5 H104" stroke="#0A7FCC" stroke-width="2.2" stroke-linecap="round"/>
<rect x="141.2" y="48.5" width="1" height="43" fill="#DADADA"/>
<rect x="283" y="48.5" width="1" height="43" fill="#DADADA"/>
<rect x="780" y="48.5" width="1" height="43" fill="#DADADA"/>
<path d="M174.5 52.5 L166.5 60.5 L174.5 68.5 M167 60.5 H181 C186 60.5 189.5 64 189.5 69.5" fill="none" stroke="#0A7FCC" stroke-width="2.6" stroke-linecap="round" stroke-linejoin="round"/>
<path d="M243 52.5 L251 60.5 L243 68.5 M250.5 60.5 H236.5 C231.5 60.5 228 64 228 69.5" fill="none" stroke="#999" stroke-width="2.6" stroke-linecap="round" stroke-linejoin="round"/>
<rect x="306.7" y="47.6" width="7.2" height="7.2" rx="1" fill="#0A7FCC"/>
<rect x="309.0" y="49.9" width="2.6" height="2.6" fill="#fff"/>
<rect x="306.7" y="56.2" width="7.2" height="7.2" rx="1" fill="#0A7FCC"/>
<rect x="309.0" y="58.5" width="2.6" height="2.6" fill="#fff"/>
<rect x="306.7" y="64.8" width="7.2" height="7.2" rx="1" fill="#0A7FCC"/>
<rect x="309.0" y="67.1" width="2.6" height="2.6" fill="#fff"/>
<rect x="315.3" y="47.6" width="7.2" height="7.2" rx="1" fill="#0A7FCC"/>
<rect x="317.6" y="49.9" width="2.6" height="2.6" fill="#fff"/>
<rect x="315.3" y="56.2" width="7.2" height="7.2" rx="1" fill="#0A7FCC"/>
<rect x="315.3" y="64.8" width="7.2" height="7.2" rx="1" fill="#0A7FCC"/>
<rect x="317.6" y="67.1" width="2.6" height="2.6" fill="#fff"/>
<rect x="323.9" y="47.6" width="7.2" height="7.2" rx="1" fill="#0A7FCC"/>
<rect x="326.2" y="49.9" width="2.6" height="2.6" fill="#fff"/>
<rect x="323.9" y="56.2" width="7.2" height="7.2" rx="1" fill="#0A7FCC"/>
<rect x="326.2" y="58.5" width="2.6" height="2.6" fill="#fff"/>
<rect x="323.9" y="64.8" width="7.2" height="7.2" rx="1" fill="#0A7FCC"/>
<rect x="326.2" y="67.1" width="2.6" height="2.6" fill="#fff"/>
<path d="M478.5 59.5 V56 C478.5 48.5 491.5 48.5 491.5 56 V59.5" fill="none" stroke="#0A7FCC" stroke-width="2.8"/>
<rect x="475.5" y="59.5" width="19" height="12.8" rx="2" fill="none" stroke="#0A7FCC" stroke-width="2.8"/>
<rect x="484" y="64" width="2" height="3.8" rx="1" fill="#0A7FCC"/>
<path d="M522.8 51 V63.6 M538.6 51 V63.6 M525 57.3 H536.5 M527.8 54.5 L525 57.3 L527.8 60.1 M533.7 54.5 L536.5 57.3 L533.7 60.1" fill="none" stroke="#0A7FCC" stroke-width="1.3"/>
<path d="M524 75.2 H538.7 M524 89.2 H538.7 M531.3 77.5 V87 M528.5 80.3 L531.3 77.5 L534.1 80.3 M528.5 84.2 L531.3 87 L534.1 84.2" fill="none" stroke="#0A7FCC" stroke-width="1.3"/>
<path d="M714.50 51.40 A8.8 8.8 0 0 1 714.81 68.99 M712.82 68.84 A8.8 8.8 0 0 1 709.20 67.23 M707.38 65.37 A8.8 8.8 0 0 1 705.73 60.97 M706.00 57.92 A8.8 8.8 0 0 1 708.17 54.09" fill="none" stroke="#0A7FCC" stroke-width="2.9"/>
<path d="M707 51.3 L714.8 45.6 V57 Z" fill="#0A7FCC"/>
<path d="M745.59 68.99 A8.8 8.8 0 0 1 745.90 51.40 M751.20 67.23 A8.8 8.8 0 0 1 747.58 68.84 M754.67 60.97 A8.8 8.8 0 0 1 753.02 65.37 M752.23 54.09 A8.8 8.8 0 0 1 754.40 57.92" fill="none" stroke="#0A7FCC" stroke-width="2.9"/>
<path d="M753.4 51.3 L745.6 45.6 V57 Z" fill="#0A7FCC"/>
<path d="M816.5 50.5 L827.5 55.5 V67 L816.5 72 L805.5 67 V55.5 Z M805.8 55.8 L816.5 61 L827.2 55.8 M816.5 61 V71.5" fill="none" stroke="#0A7FCC" stroke-width="2.6" stroke-linejoin="round"/>
<path d="M811 53 L821.5 58" stroke="#0A7FCC" stroke-width="2.4"/>
<circle cx="878.6" cy="60.5" r="11" fill="none" stroke="#0A7FCC" stroke-width="2.7"/>
<path d="M874.2 57.3 C874.2 54.3 876.2 52.8 878.6 52.8 C881.2 52.8 883 54.5 883 57 C883 60.5 878.6 60.8 878.6 64" fill="none" stroke="#0A7FCC" stroke-width="2.5" stroke-linecap="round"/>
<circle cx="878.6" cy="67.5" r="1.6" fill="#0A7FCC"/>
<path d="M927 72 H954" stroke="#0A7FCC" stroke-width="2.5" stroke-linecap="round"/>
<path d="M928.6 60.2 L945.5 49.8 L953.6 62.2 L936.8 70.5 Z" fill="none" stroke="#0A7FCC" stroke-width="2.6" stroke-linejoin="round"/>
<path d="M933.5 61.5 L936.5 62.8 L944.8 58.8 L942.5 54.5" fill="none" stroke="#0A7FCC" stroke-width="2.3" stroke-linecap="round" stroke-linejoin="round"/>
</svg>
<div class="a" style="left:-113.7px;top:79.0px;width:300px;text-align:center;font-size:14px;line-height:18px;color:#555;font-weight:normal;white-space:nowrap;-webkit-text-stroke:0.2px #555">文件</div>
<div class="a" style="left:-52px;top:79.0px;width:300px;text-align:center;font-size:14px;line-height:18px;color:#555;font-weight:normal;white-space:nowrap;-webkit-text-stroke:0.2px #555">保存</div>
<div class="a" style="left:27px;top:79.0px;width:300px;text-align:center;font-size:14px;line-height:18px;color:#555;font-weight:normal;white-space:nowrap;-webkit-text-stroke:0.2px #555">撤销</div>
<div class="a" style="left:89.30000000000001px;top:79.0px;width:300px;text-align:center;font-size:14px;line-height:18px;color:#555;font-weight:normal;white-space:nowrap;-webkit-text-stroke:0.2px #555">重做</div>
<div class="a" style="left:168.3px;top:79.0px;width:300px;text-align:center;font-size:14px;line-height:18px;color:#555;font-weight:normal;white-space:nowrap;-webkit-text-stroke:0.2px #555">原点</div>
<div class="a" style="left:334.5px;top:79.0px;width:300px;text-align:center;font-size:14px;line-height:18px;color:#555;font-weight:normal;white-space:nowrap;-webkit-text-stroke:0.2px #555">等比</div>
<div class="a" style="left:665.8px;top:79.0px;width:300px;text-align:center;font-size:14px;line-height:18px;color:#555;font-weight:normal;white-space:nowrap;-webkit-text-stroke:0.2px #555">造物</div>
<div class="a" style="left:727.5px;top:79.0px;width:300px;text-align:center;font-size:14px;line-height:18px;color:#555;font-weight:normal;white-space:nowrap;-webkit-text-stroke:0.2px #555">帮助</div>
<div class="a" style="left:789.8px;top:79.0px;width:300px;text-align:center;font-size:14px;line-height:18px;color:#555;font-weight:normal;white-space:nowrap;-webkit-text-stroke:0.2px #555">反馈</div>
<div class="a" style="left:212px;top:49.0px;width:300px;text-align:center;font-size:14px;line-height:18px;color:#1F6EC0;font-weight:bold;white-space:nowrap;">X</div>
<div class="a" style="left:212px;top:72.0px;width:300px;text-align:center;font-size:14px;line-height:18px;color:#1F6EC0;font-weight:bold;white-space:nowrap;">Y</div>
<div class="a" style="left:370px;top:48px;width:52px;height:20px;border:1px solid #8A8A8A;border-radius:2px;background:#fff;font-size:13.5px;line-height:18px;padding-top:1px;color:#777;text-align:left;font-weight:normal;padding-left:2px">0.00</div>
<div class="a" style="left:370px;top:71px;width:52px;height:20px;border:1px solid #8A8A8A;border-radius:2px;background:#fff;font-size:13.5px;line-height:18px;padding-top:1px;color:#777;text-align:left;font-weight:normal;padding-left:2px">0.00</div>
<div class="a" style="left:287.2px;top:49.5px;width:300px;text-align:center;font-size:14px;line-height:18px;color:#666;font-weight:normal;white-space:nowrap;">mm</div>
<div class="a" style="left:287.2px;top:72.5px;width:300px;text-align:center;font-size:14px;line-height:18px;color:#666;font-weight:normal;white-space:nowrap;">mm</div>
<div class="a" style="left:545px;top:47px;width:52px;height:20.5px;border:1px solid #8A8A8A;border-radius:2px;background:#fff;font-size:13.5px;line-height:18.5px;padding-top:1px;color:#777;text-align:left;font-weight:normal;padding-left:2px">0.00</div>
<div class="a" style="left:545px;top:72px;width:52px;height:20px;border:1px solid #8A8A8A;border-radius:2px;background:#fff;font-size:13.5px;line-height:18px;padding-top:1px;color:#777;text-align:left;font-weight:normal;padding-left:2px">0.00</div>
<div class="a" style="left:463.20000000000005px;top:49.0px;width:300px;text-align:center;font-size:14px;line-height:18px;color:#666;font-weight:normal;white-space:nowrap;">mm</div>
<div class="a" style="left:463.20000000000005px;top:73.0px;width:300px;text-align:center;font-size:14px;line-height:18px;color:#666;font-weight:normal;white-space:nowrap;">mm</div>
<div class="a" style="left:630px;top:47px;width:31px;height:20.5px;border:1px solid #8A8A8A;border-radius:2px;background:#fff;font-size:13.5px;line-height:18.5px;padding-top:1px;color:#666;text-align:center;font-weight:normal;">100</div>
<div class="a" style="left:630px;top:72px;width:31px;height:20px;border:1px solid #8A8A8A;border-radius:2px;background:#fff;font-size:13.5px;line-height:18px;padding-top:1px;color:#666;text-align:center;font-weight:normal;">100</div>
<div class="a" style="left:521.5px;top:49.0px;width:300px;text-align:center;font-size:14px;line-height:18px;color:#666;font-weight:normal;white-space:nowrap;">%</div>
<div class="a" style="left:521.5px;top:73.0px;width:300px;text-align:center;font-size:14px;line-height:18px;color:#666;font-weight:normal;white-space:nowrap;">%</div>
<div class="a" style="left:702px;top:75.5px;width:58px;height:17.5px;border:1px solid #8A8A8A;border-radius:2px;background:#fff;font-size:12px;line-height:15.5px;padding-top:1px;color:#111;text-align:center;font-weight:bold;">45</div><svg class="a" style="left:0;top:0" width="100" height="900">
<rect x="7.2" y="127.6" width="27.2" height="27.4" rx="5" fill="#D3E2F4"/>
<path d="M15 133.5 L28.5 141.5 L21.5 143 L16.5 150.3 Z" fill="none" stroke="#0A7FCC" stroke-width="2.2" stroke-linejoin="round"/>
<path d="M53 149.2 V133 H64.8 C68 133 70.1 135.2 70.1 138.4 V149.2 Z" fill="none" stroke="#9A9A9A" stroke-width="1.8" stroke-dasharray="3.2 2.2" stroke-dashoffset="0"/>
<path d="M53 133 H64.8 C68 133 70.1 135.2 70.1 138.4 V149.2" fill="none" stroke="#9A9A9A" stroke-width="1.8"/>
<path d="M12.8 190.8 L28.8 175.4" stroke="#0A7FCC" stroke-width="2" stroke-linecap="round"/>
<path d="M53.1 180 H59.1 V174 H70.9 V185.9 H64.8 V191.9 H53.1 Z" fill="#9A9A9A"/>
<path d="M11.2 231 C12 222 14.5 218.2 16.8 218.2 C20.5 218.2 21.5 232 25.2 232 C27.6 232 29.6 229 30.4 225.5" fill="none" stroke="#0A7FCC" stroke-width="2" stroke-linecap="round"/>
<rect x="53.6" y="222.2" width="10.7" height="10.7" fill="none" stroke="#9A9A9A" stroke-width="1.5"/>
<rect x="59.7" y="217.1" width="10.7" height="10.7" fill="none" stroke="#9A9A9A" stroke-width="1.5"/>
<rect x="59.7" y="222.2" width="4.6" height="5.6" fill="#9A9A9A"/>
<rect x="11.4" y="260.8" width="18.2" height="12.7" rx="1" fill="none" stroke="#0A7FCC" stroke-width="2"/>
<path d="M53.1 263.8 H59.1 V257.8 H70.9 V269.8 H64.8 V275.9 H53.1 Z M59.1 263.8 V269.8 H64.8 V263.8 Z" fill="#9A9A9A" fill-rule="evenodd"/>
<ellipse cx="20.6" cy="308.7" rx="9.2" ry="6.1" fill="none" stroke="#0A7FCC" stroke-width="2"/>
<rect x="53.5" y="298" width="1.8" height="21" rx="0.9" fill="#9A9A9A"/>
<rect x="57.3" y="301.8" width="9.2" height="4.8" rx="0.9" fill="#9A9A9A"/>
<rect x="57.3" y="310.3" width="14.5" height="4.8" rx="0.9" fill="#9A9A9A"/>
<path d="M15.8 342.7 H25.2 L29.3 350.6 L25.2 358.6 H15.8 L11.7 350.6 Z" fill="none" stroke="#0A7FCC" stroke-width="2" stroke-linejoin="round"/>
<rect x="53.3" y="342.1" width="7.4" height="7.4" rx="0.8" fill="none" stroke="#9A9A9A" stroke-width="1.6"/>
<rect x="63.2" y="341.3" width="8.2" height="8.2" rx="1" fill="#9A9A9A"/>
<rect x="52.5" y="351.4" width="8.2" height="8.2" rx="1" fill="#9A9A9A"/>
<rect x="63.2" y="351.4" width="8.2" height="8.2" rx="1" fill="#9A9A9A"/>
<path d="M13 401.5 L20.8 384.5 L28.6 401.5 M15.8 395.5 H25.8" fill="none" stroke="#0A7FCC" stroke-width="2" stroke-linecap="round" stroke-linejoin="round"/>
<path d="M52.2 400.3 L60.8 384.5 V400.3 Z" fill="#9A9A9A"/>
<path d="M63.5 386.5 V399.5 H70.5 Z" fill="none" stroke="#9A9A9A" stroke-width="1.6" stroke-linejoin="round"/>
<path d="M11.8 435.5 L21.8 425.5 L30 433.7 L20 443.5 Z" fill="none" stroke="#0A7FCC" stroke-width="2.1" stroke-linejoin="round"/>
<path d="M16.3 431 L24.5 439.2" stroke="#0A7FCC" stroke-width="2.1"/>
<path d="M53.5 423.8 V442.5 H72.7" fill="none" stroke="#9A9A9A" stroke-width="1.5"/>
<rect x="52.3" y="439.3" width="3.8" height="3.8" fill="#fff" stroke="#9A9A9A" stroke-width="1.3"/>
<path d="M57.6 438.2 L58.6 433.2 L67.6 425.2 L71.2 429 L62.4 437.4 Z" fill="none" stroke="#9A9A9A" stroke-width="1.6" stroke-linejoin="round"/>
<path d="M11.3 479.2 L24 466.6 L30.5 473.1 L17.8 485.6 Z" fill="none" stroke="#0A7FCC" stroke-width="2.4" stroke-linejoin="round"/>
<path d="M15.4 475.1 L18 477.7 M18.3 472.2 L20.9 474.8 M21.2 469.3 L23.8 471.9" stroke="#0A7FCC" stroke-width="1.6"/>
<path d="M59 468.4 H52.4 V484 H59 M64.6 468.4 H71.2 V484 H64.6" fill="none" stroke="#9A9A9A" stroke-width="2"/>
<path d="M55 476.2 H60 M57.8 474 L60 476.2 L57.8 478.4 M68.6 476.2 H63.6 M65.8 474 L63.6 476.2 L65.8 478.4" fill="none" stroke="#9A9A9A" stroke-width="1.5"/>
<path d="M61.8 469 V471 M61.8 481.2 V483.4" stroke="#9A9A9A" stroke-width="1.2"/>
<path d="M20.6 509.5 L30 514.5 L20.6 519.5 L11.2 514.5 Z" fill="none" stroke="#0A7FCC" stroke-width="2" stroke-linejoin="round"/>
<path d="M11.2 518.8 L20.6 523.8 L30 518.8 M11.2 522.8 L20.6 527.8 L30 522.8" fill="none" stroke="#0A7FCC" stroke-width="2" stroke-linejoin="round"/>
<path d="M71.5 526.4 H58.5 C54 526.4 52.2 523.5 52.2 520.6 C52.2 517.2 55 514.8 58.3 514.8 C59 510.8 61.8 509 64.5 509 C68 509 70 511.8 70 515.3 V519.6 H71.5" fill="none" stroke="#9A9A9A" stroke-width="1.6"/>
<path d="M71.5 523.4 H58.5 C56.5 523.4 55.2 522 55.2 520.6 C55.2 519 56.7 517.8 58.6 517.8 H61 V515.5 C61 513.5 62.6 512 64.5 512 C66.5 512 67.2 513.4 67.2 515.3 V522.5 H71.5" fill="none" stroke="#9A9A9A" stroke-width="1.6"/>
<rect x="12.7" y="552" width="16.2" height="16.2" rx="1" fill="none" stroke="#0A7FCC" stroke-width="2"/>
<path d="M12.7 557.4 H28.9 M18.3 557.4 V568.2" stroke="#0A7FCC" stroke-width="2"/>
<path d="M57.8 561.3 V548.8 L67.4 560 M57.8 556.3 H63.6" fill="none" stroke="#9A9A9A" stroke-width="2" stroke-linejoin="round"/>
<path d="M53.6 565.6 C51.4 566.8 51.6 569.6 54.3 568.9 L69.8 563.4 C72.6 562.4 73.4 565.2 71.2 566.6" fill="none" stroke="#9A9A9A" stroke-width="2" stroke-linecap="round"/>
<rect x="51.5" y="604.2" width="9.2" height="5" rx="1.2" fill="#9A9A9A"/>
<rect x="63.2" y="604.2" width="9.2" height="5" rx="1.2" fill="#9A9A9A"/>
<path d="M62 594 V600.8 M55.6 596.6 L58.6 600.6 M68.4 596.6 L65.4 600.6" stroke="#9A9A9A" stroke-width="2" stroke-linecap="round"/>
<rect x="7" y="776" width="27" height="27.5" rx="5" fill="#D3E2F4"/>
<path d="M15.3 788.5 V786.5 C15.3 779.8 25.7 779.8 25.7 786.5 V788.5" fill="none" stroke="#0A7FCC" stroke-width="2"/>
<rect x="12.8" y="788.5" width="15.4" height="11.2" rx="1.5" fill="none" stroke="#0A7FCC" stroke-width="2"/>
<rect x="19.6" y="792.3" width="1.8" height="3.2" rx="0.9" fill="#0A7FCC"/>
</svg><div class="a" style="left:9px;top:824px;width:20px;height:19px;background:#000;border-radius:1px"></div>
<div class="a" style="left:42.5px;top:824px;width:19.5px;height:19px;background:#FF0000;border-radius:1px"></div>
<div class="a" style="left:75.6px;top:824px;width:19.5px;height:19px;background:#FFA80F;border-radius:1px"></div>
<div class="a" style="left:108.8px;top:824px;width:19.2px;height:19px;background:#4A7FEF;border-radius:1px"></div>
<div class="a" style="left:142px;top:824px;width:19px;height:19px;background:linear-gradient(180deg,#2BA4E8 0%,#B86FE0 50%,#FB4F5A 80%,#FF4A52 100%);border-radius:1px"></div>
<svg class="a" style="left:0;top:0" width="400" height="900">
<rect x="199.5" y="827" width="15" height="11.7" fill="none" stroke="#0A7FCC" stroke-width="1.7"/>
<path d="M197 827.5 V824.5 H200 M214 824.5 H217 V827.5 M217 838 V841 H214 M200 841 H197 V838" fill="none" stroke="#0A7FCC" stroke-width="1.3"/>
<path d="M241 827.5 V824.5 H244 M257.5 824.5 H260.5 V827.5 M260.5 838 V841 H257.5 M244 841 H241 V838" fill="none" stroke="#0A7FCC" stroke-width="1.3"/>
<rect x="243.3" y="827.5" width="8.2" height="5.2" fill="#0A7FCC"/>
<path d="M255.5 828 L258.8 834 H252.3 Z" fill="#0A7FCC"/>
<ellipse cx="248.3" cy="837" rx="3.6" ry="2" fill="#0A7FCC"/>
<path d="M286.3 832.3 L290.9 827.7 A6.6 6.6 0 0 1 300.2 837 L295.6 841.6" fill="none" stroke="#0A7FCC" stroke-width="4.8"/>
<path d="M289.6 836.2 L286.6 840.2 H289.2 L287.4 844 L291.6 839.2 H289 L291 836.2 Z" fill="#0A7FCC"/>
<rect x="329" y="823.7" width="18" height="18" rx="1.8" fill="#0A7FCC"/>
<rect x="330.9" y="825.6" width="3" height="3" fill="#fff"/>
<rect x="330.9" y="831.1" width="3" height="3" fill="#fff"/>
<rect x="330.9" y="836.6" width="3" height="3" fill="#fff"/>
<rect x="336.4" y="825.6" width="3" height="3" fill="#fff"/>
<rect x="336.4" y="831.1" width="3" height="3" fill="#fff"/>
<rect x="336.4" y="836.6" width="3" height="3" fill="#fff"/>
<rect x="341.9" y="825.6" width="3" height="3" fill="#fff"/>
<rect x="341.9" y="831.1" width="3" height="3" fill="#fff"/>
<rect x="341.9" y="836.6" width="3" height="3" fill="#fff"/>
</svg><div class="a" style="left:1371px;top:82px;width:84.5px;height:21.5px;border:1px solid #8c8c8c;border-radius:3px;background:#fff"></div>
<div class="a" style="left:1460.5px;top:82px;width:92.5px;height:21.5px;border:1px solid #8c8c8c;border-radius:3px;background:#fff"></div>
<svg class="a" style="left:0;top:0" width="1600" height="900">
<rect x="1424.8" y="46.8" width="16.6" height="13.9" rx="1.2" fill="none" stroke="#0A7FCC" stroke-width="2.2"/>
<path d="M1426 58.5 L1431.2 53.5 L1434 56.3 L1440 50.5" fill="none" stroke="#0A7FCC" stroke-width="1.8" stroke-linejoin="round"/>
<circle cx="1428.2" cy="50.4" r="1.1" fill="#0A7FCC"/>
<rect x="1417" y="66" width="33" height="1.8" fill="#0A7FCC"/>
<path d="M1516.3 50.5 H1519.5 L1521.5 47 H1528.5 L1530.5 50.5 H1533.7 C1534.5 50.5 1535 51 1535 51.8 V61.6 C1535 62.3 1534.5 62.8 1533.7 62.8 H1516.3 C1515.5 62.8 1515 62.3 1515 61.6 V51.8 C1515 51 1515.5 50.5 1516.3 50.5 Z" fill="none" stroke="#999" stroke-width="1.8" stroke-linejoin="round"/>
<circle cx="1525" cy="55.5" r="2.2" fill="none" stroke="#999" stroke-width="1.6"/>
<circle cx="1573" cy="92.6" r="4.8" fill="none" stroke="#9a9a9a" stroke-width="1.7"/>
<path d="M1576.6 96.3 L1580 99.6" stroke="#9a9a9a" stroke-width="1.7" stroke-linecap="round"/>
<path d="M1444.5 92 H1449.5 L1447 94.5 Z" fill="#111"/>
<path d="M1542 92 H1547 L1544.5 94.5 Z" fill="#111"/>
<rect x="1589.5" y="108.5" width="3" height="148.5" rx="1.5" fill="#CFCFCF"/>
<path d="M1379.3 124.6 H1406.7 V111.7 L1433.2 138.3 L1406.7 165.2 V151.4 H1379.3 Z" fill="none" stroke="#555" stroke-width="1.1" stroke-linejoin="miter"/>
<path d="M1450.5 124.6 H1490.8 L1504.4 138.3 L1490.8 151.4 H1450.5 Z" fill="none" stroke="#555" stroke-width="1.1" stroke-linejoin="miter"/>
<path d="M1522.5 122.1 H1562.2 L1575.8 138.3 L1562.2 154.8 H1522.5 L1536.1 138.3 Z" fill="none" stroke="#555" stroke-width="1.1" stroke-linejoin="miter"/>
<circle cx="1406.7" cy="217.1" r="27.4" fill="none" stroke="#555" stroke-width="1.1" stroke-linejoin="miter"/>
<circle cx="1406.7" cy="217.1" r="16.5" fill="none" stroke="#555" stroke-width="1.1" stroke-linejoin="miter"/>
<path d="M1464.3 190.1 H1491.7 V203.5 H1505 V230.3 H1491.7 V244.1 H1464.3 V230.3 H1450.5 V203.5 H1464.3 Z" fill="none" stroke="#555" stroke-width="1.1" stroke-linejoin="miter"/>
<path d="M1544.8 210.6 L1544.8 200.1 L1538.7 200.1 L1549.0 190.1 L1559.3 200.1 L1553.2 200.1 L1553.2 210.6 L1555.5 212.9 L1566.0 212.9 L1566.0 206.8 L1576.0 217.1 L1566.0 227.4 L1566.0 221.3 L1555.5 221.3 L1553.2 223.6 L1553.2 234.1 L1559.3 234.1 L1549.0 244.1 L1538.7 234.1 L1544.8 234.1 L1544.8 223.6 L1542.5 221.3 L1532.0 221.3 L1532.0 227.4 L1522.0 217.1 L1532.0 206.8 L1532.0 212.9 L1542.5 212.9 Z" fill="none" stroke="#555" stroke-width="1.1" stroke-linejoin="miter"/>
<path d="M1379.7 295.7 L1390.4 285 V289.3 H1423 V285 L1433.7 295.7 L1423 306.4 V302 H1390.4 V306.4 Z" fill="none" stroke="#555" stroke-width="1.1" stroke-linejoin="miter"/>
<path d="M1477.5 270.4 L1484.6 289.3 L1504.7 290.2 L1488.9 302.7 L1494.3 322.1 L1477.5 311.0 L1460.7 322.1 L1466.1 302.7 L1450.3 290.2 L1470.4 289.3 Z" fill="none" stroke="#555" stroke-width="1.1" stroke-linejoin="miter"/>
<path d="M1548.8 320.4 L1526 296.5 C1520.5 290.5 1521 281 1527.5 275.2 C1534 269.5 1543.5 270.5 1548.8 276.5 C1554.2 270.5 1563.5 269.5 1570 275.2 C1576.5 281 1577 290.5 1571.6 296.5 Z" fill="none" stroke="#555" stroke-width="1.1" stroke-linejoin="miter"/>
<path d="M1404.80 377.20 L1404.85 377.24 L1404.90 377.29 L1404.95 377.34 L1405.00 377.40 L1405.04 377.47 L1405.07 377.53 L1405.11 377.61 L1405.13 377.68 L1405.16 377.76 L1405.17 377.85 L1405.19 377.93 L1405.19 378.02 L1405.19 378.11 L1405.19 378.21 L1405.17 378.30 L1405.15 378.40 L1405.13 378.50 L1405.09 378.59 L1405.05 378.69 L1405.01 378.79 L1404.95 378.88 L1404.89 378.98 L1404.82 379.07 L1404.75 379.16 L1404.66 379.24 L1404.57 379.33 L1404.48 379.41 L1404.38 379.48 L1404.27 379.55 L1404.15 379.62 L1404.03 379.67 L1403.90 379.73 L1403.77 379.77 L1403.64 379.81 L1403.50 379.84 L1403.35 379.87 L1403.20 379.88 L1403.05 379.89 L1402.90 379.89 L1402.74 379.88 L1402.58 379.86 L1402.42 379.83 L1402.26 379.79 L1402.10 379.75 L1401.94 379.69 L1401.78 379.62 L1401.62 379.55 L1401.47 379.46 L1401.32 379.36 L1401.17 379.26 L1401.02 379.14 L1400.88 379.02 L1400.75 378.88 L1400.62 378.74 L1400.49 378.59 L1400.38 378.43 L1400.27 378.26 L1400.17 378.08 L1400.08 377.90 L1399.99 377.71 L1399.92 377.51 L1399.85 377.30 L1399.80 377.09 L1399.76 376.88 L1399.72 376.66 L1399.70 376.44 L1399.69 376.21 L1399.70 375.98 L1399.71 375.75 L1399.74 375.51 L1399.78 375.28 L1399.84 375.05 L1399.90 374.81 L1399.98 374.58 L1400.08 374.35 L1400.18 374.12 L1400.30 373.90 L1400.43 373.68 L1400.58 373.46 L1400.74 373.25 L1400.91 373.05 L1401.09 372.86 L1401.28 372.67 L1401.49 372.49 L1401.71 372.32 L1401.93 372.16 L1402.17 372.02 L1402.42 371.88 L1402.67 371.75 L1402.94 371.64 L1403.21 371.54 L1403.49 371.45 L1403.78 371.38 L1404.07 371.32 L1404.37 371.28 L1404.68 371.25 L1404.98 371.24 L1405.29 371.25 L1405.60 371.27 L1405.92 371.30 L1406.23 371.36 L1406.54 371.43 L1406.85 371.51 L1407.16 371.62 L1407.47 371.74 L1407.77 371.87 L1408.06 372.03 L1408.35 372.20 L1408.64 372.38 L1408.91 372.59 L1409.18 372.80 L1409.44 373.04 L1409.68 373.28 L1409.92 373.55 L1410.14 373.82 L1410.35 374.11 L1410.55 374.41 L1410.73 374.73 L1410.90 375.05 L1411.05 375.39 L1411.19 375.74 L1411.30 376.09 L1411.40 376.45 L1411.49 376.82 L1411.55 377.20 L1411.59 377.58 L1411.62 377.97 L1411.62 378.36 L1411.61 378.75 L1411.57 379.14 L1411.52 379.54 L1411.44 379.93 L1411.35 380.32 L1411.23 380.71 L1411.09 381.10 L1410.93 381.48 L1410.75 381.85 L1410.55 382.22 L1410.33 382.57 L1410.09 382.92 L1409.84 383.26 L1409.56 383.59 L1409.27 383.90 L1408.95 384.20 L1408.62 384.49 L1408.28 384.76 L1407.92 385.01 L1407.54 385.25 L1407.15 385.47 L1406.75 385.66 L1406.34 385.84 L1405.91 386.00 L1405.47 386.14 L1405.03 386.26 L1404.58 386.35 L1404.12 386.42 L1403.65 386.47 L1403.18 386.50 L1402.71 386.50 L1402.23 386.47 L1401.75 386.42 L1401.28 386.35 L1400.80 386.25 L1400.33 386.13 L1399.87 385.99 L1399.40 385.81 L1398.95 385.62 L1398.50 385.40 L1398.07 385.16 L1397.64 384.89 L1397.22 384.60 L1396.82 384.29 L1396.43 383.95 L1396.06 383.60 L1395.71 383.22 L1395.37 382.83 L1395.05 382.42 L1394.75 381.99 L1394.47 381.54 L1394.22 381.07 L1393.99 380.59 L1393.78 380.10 L1393.59 379.60 L1393.43 379.08 L1393.30 378.55 L1393.19 378.02 L1393.11 377.47 L1393.05 376.92 L1393.03 376.37 L1393.03 375.81 L1393.06 375.25 L1393.12 374.70 L1393.20 374.14 L1393.32 373.58 L1393.47 373.03 L1393.64 372.48 L1393.84 371.94 L1394.07 371.41 L1394.33 370.89 L1394.62 370.38 L1394.93 369.88 L1395.27 369.40 L1395.63 368.94 L1396.02 368.49 L1396.43 368.05 L1396.87 367.64 L1397.33 367.25 L1397.81 366.88 L1398.31 366.54 L1398.83 366.22 L1399.37 365.92 L1399.92 365.65 L1400.49 365.41 L1401.08 365.19 L1401.67 365.01 L1402.28 364.85 L1402.90 364.73 L1403.53 364.64 L1404.16 364.57 L1404.80 364.55 L1405.44 364.55 L1406.08 364.58 L1406.72 364.65 L1407.36 364.75 L1408.00 364.88 L1408.63 365.05 L1409.26 365.25 L1409.88 365.48 L1410.49 365.74 L1411.08 366.04 L1411.67 366.36 L1412.23 366.72 L1412.79 367.11 L1413.32 367.52 L1413.83 367.97 L1414.33 368.44 L1414.80 368.93 L1415.24 369.46 L1415.66 370.00 L1416.06 370.57 L1416.42 371.16 L1416.76 371.77 L1417.07 372.40 L1417.35 373.05 L1417.59 373.71 L1417.80 374.39 L1417.98 375.08 L1418.12 375.78 L1418.23 376.48 L1418.30 377.20 L1418.34 377.92 L1418.34 378.65 L1418.30 379.37 L1418.22 380.10 L1418.11 380.82 L1417.96 381.54 L1417.78 382.26 L1417.56 382.97 L1417.30 383.66 L1417.00 384.35 L1416.67 385.02 L1416.31 385.68 L1415.91 386.32 L1415.48 386.94 L1415.01 387.54 L1414.52 388.12 L1413.99 388.68 L1413.44 389.21 L1412.85 389.71 L1412.24 390.19 L1411.60 390.63 L1410.94 391.04 L1410.26 391.42 L1409.56 391.77 L1408.84 392.08 L1408.10 392.36 L1407.34 392.60 L1406.57 392.80 L1405.79 392.96 L1405.00 393.09 L1404.20 393.17 L1403.40 393.22 L1402.59 393.22 L1401.78 393.18 L1400.97 393.10 L1400.16 392.98 L1399.35 392.82 L1398.56 392.62 L1397.77 392.38 L1396.99 392.09 L1396.23 391.77 L1395.48 391.41 L1394.74 391.01 L1394.03 390.57 L1393.34 390.09 L1392.67 389.58 L1392.02 389.03 L1391.40 388.45 L1390.81 387.84 L1390.25 387.19 L1389.72 386.52 L1389.22 385.82 L1388.76 385.09 L1388.33 384.33 L1387.94 383.56 L1387.59 382.76 L1387.28 381.94 L1387.01 381.11 L1386.78 380.26 L1386.60 379.40 L1386.46 378.53 L1386.36 377.64 L1386.30 376.76 L1386.29 375.86 L1386.33 374.97 L1386.41 374.07 L1386.54 373.18 L1386.71 372.29 L1386.93 371.41 L1387.19 370.54 L1387.50 369.69 L1387.85 368.84 L1388.24 368.01 L1388.68 367.20 L1389.15 366.41 L1389.67 365.65 L1390.23 364.91 L1390.83 364.19 L1391.46 363.51 L1392.13 362.85 L1392.83 362.23 L1393.57 361.64 L1394.34 361.09 L1395.13 360.58 L1395.96 360.11 L1396.81 359.68 L1397.68 359.29 L1398.57 358.94 L1399.48 358.64 L1400.41 358.38 L1401.35 358.17 L1402.31 358.01 L1403.27 357.89 L1404.24 357.83 L1405.22 357.81 L1406.20 357.84 L1407.18 357.92 L1408.15 358.05 L1409.12 358.23 L1410.09 358.46 L1411.04 358.74 L1411.98 359.07 L1412.91 359.45 L1413.81 359.87 L1414.70 360.34 L1415.57 360.85 L1416.41 361.41 L1417.22 362.02 L1418.00 362.66 L1418.75 363.34 L1419.47 364.07 L1420.16 364.83 L1420.80 365.63 L1421.41 366.46 L1421.97 367.32 L1422.50 368.21 L1422.97 369.13 L1423.41 370.08 L1423.79 371.04 L1424.13 372.03 L1424.41 373.04 L1424.65 374.06 L1424.84 375.10 L1424.97 376.15 L1425.05 377.20 L1425.08 378.26 L1425.05 379.32 L1424.97 380.39 L1424.84 381.45 L1424.65 382.50 L1424.41 383.55 L1424.12 384.59 L1423.77 385.61 L1423.37 386.61 L1422.92 387.60 L1422.42 388.57 L1421.87 389.51 L1421.27 390.42 L1420.63 391.31 L1419.94 392.16 L1419.20 392.98 L1418.42 393.77 L1417.61 394.52 L1416.75 395.22 L1415.86 395.88 L1414.93 396.50 L1413.97 397.08 L1412.98 397.60 L1411.96 398.08 L1410.92 398.50 L1409.86 398.88 L1408.77 399.20 L1407.67 399.46 L1406.55 399.67 L1405.42 399.83 L1404.29 399.92 L1403.14 399.96 L1401.99 399.94 L1400.85 399.87 L1399.70 399.73 L1398.56 399.54 L1397.43 399.29 L1396.31 398.98 L1395.21 398.62 L1394.12 398.20 L1393.05 397.73 L1392.00 397.20 L1390.98 396.61 L1389.99 395.98 L1389.03 395.29 L1388.11 394.56 L1387.22 393.77 L1386.36 392.95 L1385.55 392.07 L1384.79 391.16 L1384.06 390.21 L1383.39 389.22 L1382.76 388.19 L1382.19 387.13 L1381.67 386.04 L1381.20 384.93 L1380.79 383.79 L1380.43 382.62 L1380.14 381.44 L1379.90 380.24 L1379.73 379.03 L1379.61 377.81 L1379.56 376.59 L1379.56 375.35 L1379.63 374.12 L1379.77 372.89 L1379.96 371.67 L1380.22 370.45 L1380.53 369.25 L1380.91 368.06 L1381.35 366.89 L1381.85 365.74 L1382.41 364.61 L1383.02 363.52 L1383.69 362.45 L1384.42 361.41 L1385.20 360.41 L1386.03 359.45 L1386.90 358.53 L1387.83 357.65 L1388.80 356.82 L1389.81 356.04 L1390.87 355.31 L1391.96 354.63 L1393.08 354.00 L1394.24 353.43 L1395.43 352.92 L1396.65 352.47 L1397.89 352.08 L1399.14 351.75 L1400.42 351.48 L1401.71 351.28 L1403.02 351.15 L1404.33 351.08 L1405.64 351.07 L1406.96 351.13 L1408.28 351.26 L1409.58 351.46 L1410.89 351.72 L1412.17 352.04 L1413.45 352.44 L1414.70 352.89 L1415.93 353.41 L1417.14 354.00 L1418.32 354.64 L1419.46 355.34 L1420.58 356.11 L1421.65 356.92 L1422.68 357.80 L1423.67 358.72 L1424.62 359.70 L1425.52 360.73 L1426.36 361.80 L1427.15 362.91 L1427.89 364.07 L1428.57 365.26 L1429.18 366.49 L1429.74 367.75 L1430.24 369.04 L1430.67 370.35 L1431.03 371.69 L1431.32 373.05 L1431.55 374.42 L1431.71 375.81 L1431.80 377.20" fill="none" stroke="#4a5a4a" stroke-width="1.1"/>
<path d="M1477.5 347.6 L1485.2 361.0 L1500.7 361.0 L1493.0 374.4 L1500.7 387.8 L1485.2 387.8 L1477.5 401.2 L1469.8 387.8 L1454.3 387.8 L1462.0 374.4 L1454.3 361.0 L1469.8 361.0 Z" fill="none" stroke="#555" stroke-width="1.1" stroke-linejoin="miter"/>
<path d="M1539.1 350.2 H1576 L1558.5 398.8 H1521.6 Z" fill="none" stroke="#555" stroke-width="1.1" stroke-linejoin="miter"/>
<path d="M1381 434 C1390 425 1422 425 1431 434" fill="none" stroke="#555" stroke-width="1.1" stroke-linejoin="miter"/>
<path d="M1528 434 L1549 426 L1570 434" fill="none" stroke="#555" stroke-width="1.1" stroke-linejoin="miter"/>
<path d="M1375 485.5 V454.5 Q1375 452.5 1377 452.5 H1591.7 Q1593.7 452.5 1593.7 454.5 V485.5 Z" fill="#0780CC"/>
<rect x="1375" y="485.5" width="218.7" height="33" fill="#EBEBEB"/>
<rect x="1377" y="495" width="14" height="13.7" fill="#000"/>
<path d="M1559.5 501.8 C1562 497 1565.5 495.5 1568.5 495.5 C1571.5 495.5 1575 497 1577.5 501.8 C1575 506.6 1571.5 508.2 1568.5 508.2 C1565.5 508.2 1562 506.6 1559.5 501.8 Z" fill="none" stroke="#111" stroke-width="1.6"/>
<circle cx="1568.5" cy="501.8" r="3.3" fill="none" stroke="#111" stroke-width="1.6"/>
<circle cx="1479.4" cy="760" r="51" fill="none" stroke="#0780CC" stroke-width="3"/>
<circle cx="1479.4" cy="760" r="45.5" fill="#0780CC"/>
<rect x="1375" y="824" width="216" height="25" fill="#D4D4D4"/>
<rect x="1377" y="825.6" width="159" height="21.8" fill="#fff"/>
<circle cx="1436" cy="836" r="6" fill="none" stroke="#F08A3C" stroke-width="1.5"/>
<path d="M1433.2 833.2 L1438.8 838.8 M1438.8 833.2 L1433.2 838.8" stroke="#F08A3C" stroke-width="1.4"/>
</svg>
<div class="a" style="left:1374.5px;top:85.0px;font-size:12px;line-height:16px;color:#111;font-weight:bold;white-space:nowrap;">1.基础图案</div>
<div class="a" style="left:1464px;top:85.0px;font-size:12px;line-height:16px;color:#111;font-weight:bold;white-space:nowrap;">1.基本图形</div>
<div class="a" style="left:1255.8px;top:170.70000000000002px;width:300px;text-align:center;font-size:9.4px;line-height:13.4px;color:#222;font-weight:bold;white-space:nowrap;">箭头</div>
<div class="a" style="left:1327.6px;top:170.70000000000002px;width:300px;text-align:center;font-size:9.4px;line-height:13.4px;color:#222;font-weight:bold;white-space:nowrap;">箭头1</div>
<div class="a" style="left:1399px;top:170.70000000000002px;width:300px;text-align:center;font-size:9.4px;line-height:13.4px;color:#222;font-weight:bold;white-space:nowrap;">箭头2</div>
<div class="a" style="left:1256px;top:250.10000000000002px;width:300px;text-align:center;font-size:9.4px;line-height:13.4px;color:#222;font-weight:bold;white-space:nowrap;">同心圆</div>
<div class="a" style="left:1327.6px;top:250.10000000000002px;width:300px;text-align:center;font-size:9.4px;line-height:13.4px;color:#222;font-weight:bold;white-space:nowrap;">十字</div>
<div class="a" style="left:1399px;top:250.10000000000002px;width:300px;text-align:center;font-size:9.4px;line-height:13.4px;color:#222;font-weight:bold;white-space:nowrap;">十字箭头</div>
<div class="a" style="left:1256px;top:329.3px;width:300px;text-align:center;font-size:9.4px;line-height:13.4px;color:#222;font-weight:bold;white-space:nowrap;">双箭头</div>
<div class="a" style="left:1327.6px;top:329.3px;width:300px;text-align:center;font-size:9.4px;line-height:13.4px;color:#222;font-weight:bold;white-space:nowrap;">五角星</div>
<div class="a" style="left:1399px;top:329.3px;width:300px;text-align:center;font-size:9.4px;line-height:13.4px;color:#222;font-weight:bold;white-space:nowrap;">心形</div>
<div class="a" style="left:1256px;top:407.6px;width:300px;text-align:center;font-size:9.4px;line-height:13.4px;color:#222;font-weight:bold;white-space:nowrap;">螺旋线</div>
<div class="a" style="left:1327.6px;top:407.6px;width:300px;text-align:center;font-size:9.4px;line-height:13.4px;color:#222;font-weight:bold;white-space:nowrap;">六角星</div>
<div class="a" style="left:1399px;top:407.6px;width:300px;text-align:center;font-size:9.4px;line-height:13.4px;color:#222;font-weight:bold;white-space:nowrap;">平行四边形</div>
<div class="a" style="left:1254.5px;top:461.2px;width:300px;text-align:center;font-size:13px;line-height:17px;color:#fff;font-weight:normal;white-space:nowrap;-webkit-text-stroke:0.45px #fff">加工工艺</div>
<div class="a" style="left:1312px;top:461.2px;width:300px;text-align:center;font-size:13px;line-height:17px;color:#fff;font-weight:normal;white-space:nowrap;-webkit-text-stroke:0.45px #fff">速度</div>
<div class="a" style="left:1366px;top:461.2px;width:300px;text-align:center;font-size:13px;line-height:17px;color:#fff;font-weight:normal;white-space:nowrap;-webkit-text-stroke:0.45px #fff">功率</div>
<div class="a" style="left:1418.5px;top:461.2px;width:300px;text-align:center;font-size:13px;line-height:17px;color:#fff;font-weight:normal;white-space:nowrap;-webkit-text-stroke:0.45px #fff">输出</div>
<div class="a" style="left:1258px;top:494.2px;width:300px;text-align:center;font-size:13px;line-height:17px;color:#111;font-weight:normal;white-space:nowrap;-webkit-text-stroke:0.5px #111">切割</div>
<div class="a" style="left:1311.6px;top:493.8px;width:300px;text-align:center;font-size:13px;line-height:17px;color:#666;font-weight:normal;white-space:nowrap;-webkit-text-stroke:0.3px #666">40.0</div>
<div class="a" style="left:1366.3px;top:493.8px;width:300px;text-align:center;font-size:13px;line-height:17px;color:#666;font-weight:normal;white-space:nowrap;-webkit-text-stroke:0.3px #666">99.0</div>
<div class="a" style="left:1329.4px;top:746.5px;width:300px;text-align:center;font-size:23px;line-height:27px;color:#fff;font-weight:normal;white-space:nowrap;-webkit-text-stroke:0.5px #fff">开始</div>
<div class="a" style="left:1316px;top:828.0px;width:300px;text-align:center;font-size:13px;line-height:17px;color:#F08A3C;font-weight:normal;white-space:nowrap;-webkit-text-stroke:0.2px #F08A3C">未连接</div>
<div class="a" style="left:1413.5px;top:828.0px;width:300px;text-align:center;font-size:13px;line-height:17px;color:#111;font-weight:normal;white-space:nowrap;-webkit-text-stroke:0.5px #111">切换</div><svg class="a" style="left:0;top:0" width="1600" height="900">
<defs><linearGradient id="wg" x1="0" y1="0" x2="1" y2="1"><stop offset="0" stop-color="#3BB9F5"/><stop offset="1" stop-color="#0C6FD2"/></linearGradient><linearGradient id="fg" x1="0" y1="0" x2="0" y2="1"><stop offset="0" stop-color="#FFD766"/><stop offset="1" stop-color="#F5B422"/></linearGradient></defs>
<rect x="15.8" y="872.4" width="8.9" height="8.9" rx="0.6" fill="url(#wg)"/>
<rect x="25.5" y="872.4" width="8.9" height="8.9" rx="0.6" fill="url(#wg)"/>
<rect x="15.8" y="882.1" width="8.9" height="8.9" rx="0.6" fill="url(#wg)"/>
<rect x="25.5" y="882.1" width="8.9" height="8.9" rx="0.6" fill="url(#wg)"/>
<rect x="46" y="869.4" width="170" height="23.9" rx="11.95" fill="#EEF5F8" stroke="#C4D6DE" stroke-width="0.8"/>
<circle cx="59.5" cy="880.6" r="4.6" fill="none" stroke="#222" stroke-width="1.4"/>
<path d="M62.8 884 L65.8 887" stroke="#222" stroke-width="1.5" stroke-linecap="round"/>
<circle cx="193.5" cy="880.5" r="7.5" fill="#6CB33F"/>
<circle cx="191" cy="879" r="3.6" fill="#E04B3B"/><circle cx="196.5" cy="882.5" r="3" fill="#D95848"/><circle cx="194" cy="877.5" r="2" fill="#C9A0D8"/>
<path d="M179 876 L186 887 M208 876 L200 887" stroke="#D9A066" stroke-width="1.5"/>
<circle cx="179.5" cy="875" r="2.2" fill="#E8B07A"/><circle cx="207.5" cy="875" r="2.4" fill="#E8B07A"/>
<path d="M225.8 875 Q225.8 873 227.8 873 H233 L235 875 H243 Q245 875 245 877 V888 Q245 890 243 890 H227.8 Q225.8 890 225.8 888 Z" fill="url(#fg)"/>
<rect x="225.8" y="877" width="19.2" height="13" rx="1.5" fill="#FFCD4A"/>
<rect x="229.5" y="884.5" width="12" height="5.5" rx="1" fill="#1A73D0"/>
<rect x="233" y="894.2" width="5" height="1.6" rx="0.8" fill="#7A8C94"/>
<path d="M270 872.3 C273.5 874.5 276.5 875 278.3 875 V881 C278.3 886 274.5 889 270 890 C265.5 889 261.5 886 261.5 881 V875 C263.5 875 266.5 874.5 270 872.3 Z" fill="#1D63D8"/>
<path d="M267 876.5 V885.5 H274.5" fill="none" stroke="#fff" stroke-width="2.6"/>
<path d="M298.5 881.8 H310.8 C311 876.5 308 873.8 304.3 873.8 C300.2 873.8 297.3 877 297.3 881.3 C297.3 885.8 300.5 888.8 304.5 888.8 C307.2 888.8 309.4 887.5 310.6 885.3" fill="none" stroke="#52B52B" stroke-width="3"/>
<path d="M297.8 889.2 C294.2 883 298.5 874.5 311.8 872.6" fill="none" stroke="#3FA52A" stroke-width="1.2"/>
<rect x="302" y="894.2" width="5" height="1.6" rx="0.8" fill="#7A8C94"/>
<circle cx="338.7" cy="881" r="8.6" fill="#1690E8"/>
<path d="M331 882 C333 877 338 875.5 342 876.5 C345 877.5 346 880 344.5 882 H334 C335 886 340 887 346 884.5" fill="none" stroke="#fff" stroke-width="2"/>
<rect x="358" y="866" width="29.5" height="30" rx="4" fill="#EAF3F7" fill-opacity="0.85"/>
<rect x="363.5" y="872" width="19.2" height="18.7" rx="2" fill="#2C8ED8"/>
<path d="M367.5 875.5 L365.5 886 H374.5" fill="none" stroke="#fff" stroke-width="2.4"/>
<rect x="375.5" y="874" width="5" height="5" fill="none" stroke="#F3C32B" stroke-width="1"/>
<rect x="368" y="894" width="9.7" height="2" rx="1" fill="#1F7E8C"/>
<rect x="398.5" y="877.5" width="18" height="17.5" rx="2" fill="#4C9ED6"/>
<path d="M401 890 L414 881 M407 879 L409 893" stroke="#E8F4FC" stroke-width="1.3"/>
<circle cx="399" cy="878" r="1" fill="#D86040"/><circle cx="416" cy="878" r="1" fill="#D86040"/><circle cx="399" cy="894.5" r="1" fill="#D86040"/><circle cx="416" cy="894.5" r="1" fill="#D86040"/>
<path d="M1397 883.2 L1400.7 879.5 L1404.4 883.2" fill="none" stroke="#222" stroke-width="1.3"/>
<path d="M1450 877.5 L1459.5 875 L1462 884.5 L1452.5 887 Z" fill="#EF5A28"/>
<path d="M1458 878.5 C1455.5 877.8 1453 878.5 1453.2 880.2 C1453.4 882 1458.5 881.2 1458.8 883.2 C1459 885 1456 885.8 1453.5 884.8" fill="none" stroke="#fff" stroke-width="1.5"/>
<path d="M1487 876 H1480 V884.5 H1488.5 M1482.5 887 H1486.5 M1484.5 884.5 V887" fill="none" stroke="#333" stroke-width="1"/>
<path d="M1489.5 877 V886.5 M1488.3 876 H1490.7 V879 H1488.3 Z" fill="none" stroke="#333" stroke-width="0.9"/>
<path d="M1497.5 879 H1500 L1503 876.5 V886 L1500 883.5 H1497.5 Z" fill="none" stroke="#333" stroke-width="1"/>
<path d="M1505 879.2 C1506 880.5 1506 882 1505 883.3 M1507 877.5 C1508.8 879.8 1508.8 882.7 1507 885" fill="none" stroke="#888" stroke-width="0.9"/>
<path d="M1574 885 H1582.5 L1581 883 V880 C1581 877.5 1579.5 876.3 1578.2 876.3 C1577 876.3 1575.5 877.5 1575.5 880 V883 Z M1576.8 886.5 H1579.8" fill="none" stroke="#222" stroke-width="1.1" stroke-linejoin="round"/>
</svg>
<div class="a" style="left:73.5px;top:873.3px;font-size:12px;line-height:16px;color:#555;font-weight:normal;white-space:nowrap;">搜索</div>
<div class="a" style="left:1276px;top:873.2px;width:300px;text-align:center;font-size:12px;line-height:16px;color:#555;font-weight:normal;white-space:nowrap;">英</div>
<div class="a" style="right:33.200000000000045px;top:868.8px;font-size:10px;line-height:14px;color:#222;font-weight:normal;white-space:nowrap;">12:48</div>
<div class="a" style="right:33.200000000000045px;top:881.0px;font-size:10px;line-height:14px;color:#222;font-weight:normal;white-space:nowrap;">2024/6/23</div></body></html>
